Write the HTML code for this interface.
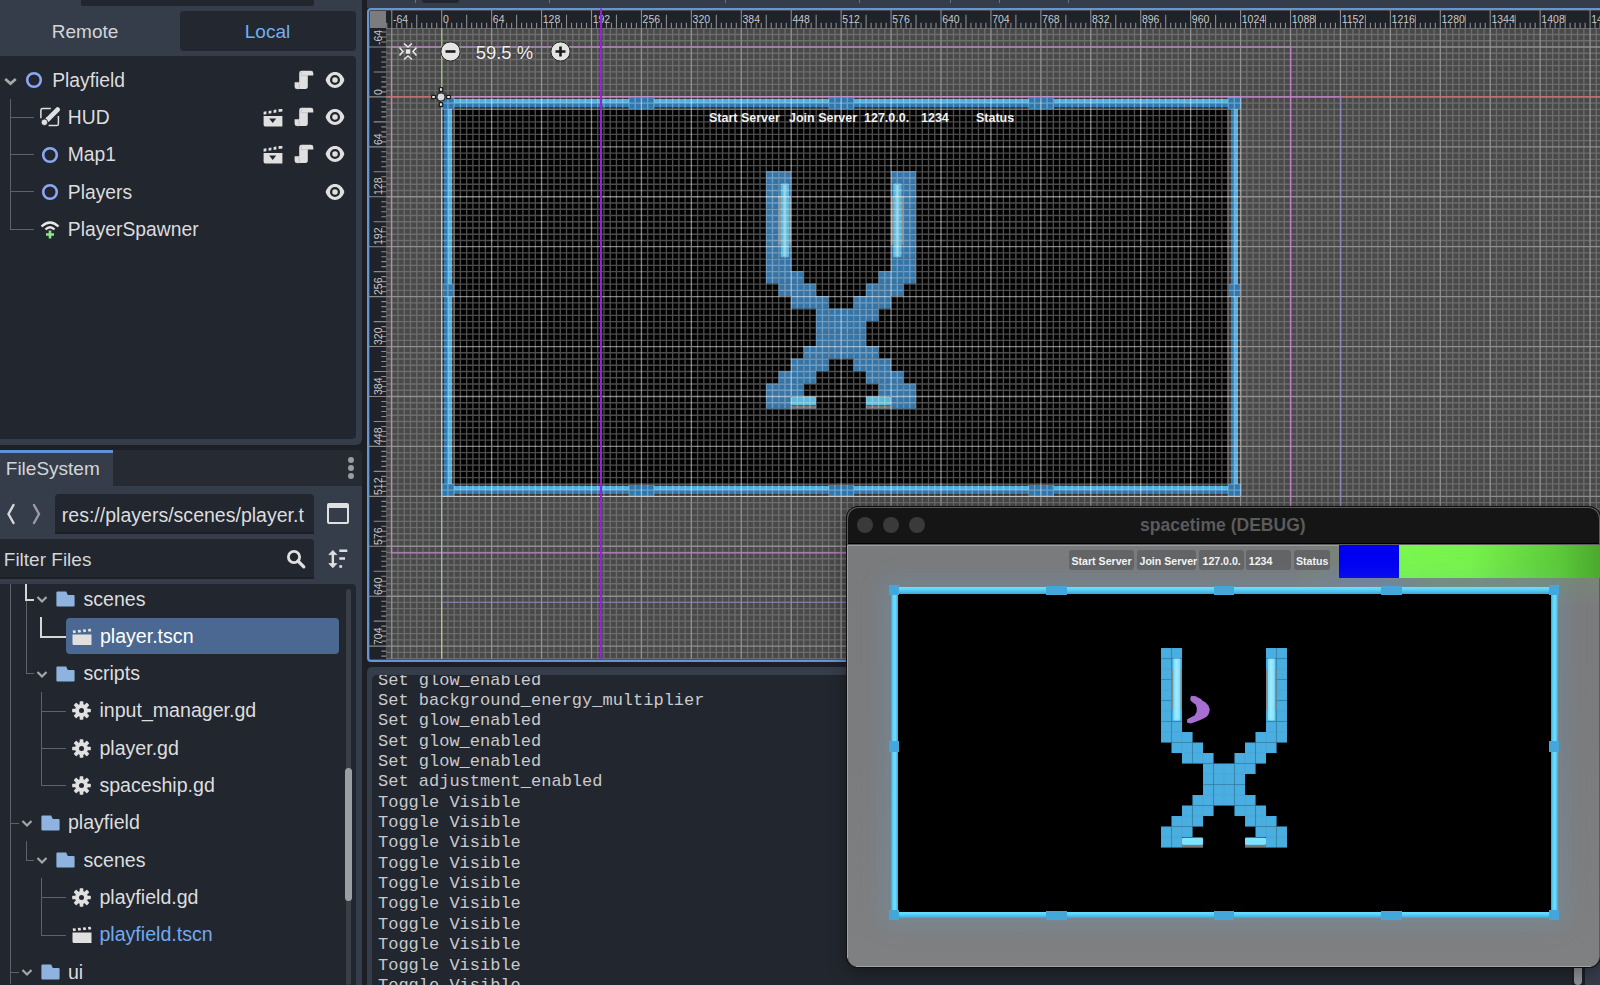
<!DOCTYPE html>
<html><head><meta charset="utf-8"><style>
html,body{margin:0;padding:0;width:1600px;height:985px;overflow:hidden;background:#1c1f25}
.a{position:absolute}
.t{position:absolute;white-space:nowrap;font-family:"Liberation Sans",sans-serif;line-height:1}
</style></head><body>
<div class="a" style="left:0;top:0;width:362px;height:985px;background:#1d2026"></div>
<div class="a" style="left:0;top:0;width:361.7px;height:444.5px;background:#363d4a;border-radius:0 0 6px 0"></div>
<div class="a" style="left:0;top:450px;width:361.7px;height:535px;background:#363d4a;border-radius:0 6px 0 0"></div>
<div class="a" style="left:81px;top:0;width:233px;height:5.6px;background:#22262e;border-radius:0 0 2px 2px"></div>
<div class="a" style="left:180px;top:11px;width:176px;height:39.5px;background:#232730;border-radius:4px"></div>
<div class="t" style="left:51.80px;top:22.42px;font-size:19px;color:#d3d5d8;">Remote</div>
<div class="t" style="left:244.80px;top:22.42px;font-size:19px;color:#73aef0;">Local</div>
<div class="a" style="left:0;top:56px;width:356px;height:383px;background:#22262e;border-radius:0 4px 4px 0"></div>
<div class="a" style="left:0;top:450px;width:361.7px;height:36px;background:#262a33;border-radius:0 6px 0 0"></div>
<div class="a" style="left:0;top:452.5px;width:112.7px;height:33.5px;background:#363d4a"></div>
<div class="a" style="left:0;top:449.8px;width:112.7px;height:3px;background:#5e93d4"></div>
<div class="t" style="left:5.80px;top:459.42px;font-size:19px;color:#d3d5d8;">FileSystem</div>
<div class="a" style="left:348.2px;top:457px;width:6px;height:6px;border-radius:50%;background:#9a9ca0"></div>
<div class="a" style="left:348.2px;top:465px;width:6px;height:6px;border-radius:50%;background:#9a9ca0"></div>
<div class="a" style="left:348.2px;top:473px;width:6px;height:6px;border-radius:50%;background:#9a9ca0"></div>
<div class="a" style="left:0;top:486px;width:362px;height:98px;background:#363d4a"></div>
<svg class="a" style="left:4px;top:500px" width="40" height="28"><path d="M9.5 5 L4.5 14 L9.5 23" stroke="#d8d8d8" stroke-width="2.4" fill="none" stroke-linecap="round"/><path d="M30 5 L35 14 L30 23" stroke="#9a9ca0" stroke-width="2.4" fill="none" stroke-linecap="round"/></svg>
<div class="a" style="left:55px;top:494px;width:259.4px;height:39.7px;background:#22262e;border-radius:4px 4px 0 0;border-bottom:2px solid #1c1f25;box-sizing:border-box"></div>
<div class="t" style="left:61.80px;top:505.95px;font-size:19.55px;color:#dcdddf;">res://players/scenes/player.t</div>
<div class="a" style="left:327.4px;top:503px;width:21.4px;height:21px;border:2.7px solid #e0e0e0;border-top-width:5.4px;box-sizing:border-box;border-radius:2px"></div>
<div class="a" style="left:0;top:539px;width:314.4px;height:39.8px;background:#22262e;border-radius:0 4px 0 0;border-bottom:2px solid #1c1f25;box-sizing:border-box"></div>
<div class="t" style="left:3.80px;top:550.42px;font-size:19px;color:#d3d5d8;">Filter Files</div>
<svg class="a" style="left:285px;top:548px" width="22" height="22"><circle cx="9" cy="9" r="5.6" stroke="#e0e0e0" stroke-width="2.8" fill="none"/><path d="M13 13 L18.8 18.8" stroke="#e0e0e0" stroke-width="3.2" stroke-linecap="round"/></svg>
<svg class="a" style="left:327px;top:548px" width="22" height="22"><path d="M5.85 4 L5.85 18" stroke="#e0e0e0" stroke-width="2.4"/><path d="M1.9 6.6 L5.85 2.4 L9.8 6.6 Z M1.9 15.6 L5.85 19.8 L9.8 15.6 Z" fill="#e0e0e0" stroke="#e0e0e0" stroke-width="0.8" stroke-linejoin="round"/><path d="M12.3 2.7 L20.3 2.7 M12.3 10.4 L18 10.4 M12.3 18.5 L15.1 18.5" stroke="#e0e0e0" stroke-width="2.5"/></svg>
<div class="a" style="left:0;top:584.3px;width:356px;height:401px;background:#22262e;border-radius:0 4px 0 0"></div>
<div class="a" style="left:346px;top:589px;width:5px;height:396px;background:#3a3f47;border-radius:3px"></div>
<div class="a" style="left:345px;top:768px;width:6.5px;height:133px;background:#9b9ea3;border-radius:3.5px"></div>
<div class="a" style="left:10.2px;top:99.4px;width:1px;height:129.79999999999998px;background:#5d6168"></div>
<div class="a" style="left:10.2px;top:117.0px;width:24px;height:1px;background:#5d6168"></div>
<div class="a" style="left:10.2px;top:154.1px;width:24px;height:1px;background:#5d6168"></div>
<div class="a" style="left:10.2px;top:191.4px;width:24px;height:1px;background:#5d6168"></div>
<div class="a" style="left:10.2px;top:228.7px;width:24px;height:1px;background:#5d6168"></div>
<svg class="a" style="left:2.2px;top:74.5px" width="16" height="12"><path d="M3.2 4 L8.5 8.6 L13.8 4" stroke="#a5a7aa" stroke-width="2.8" fill="none"/></svg>
<svg class="a" style="left:25px;top:71px" width="18" height="18"><circle cx="9" cy="9" r="6.8" fill="none" stroke="#8da6f5" stroke-width="2.6"/></svg>
<div class="t" style="left:52.20px;top:70.76px;font-size:19.3px;color:#dcdddf;">Playfield</div>
<svg class="a" style="left:40px;top:107px" width="22" height="22" viewBox="0 0 22 22">
<path d="M10.8 1.5 L2.6 1.5 Q0.9 1.5 0.9 3.2 L0.9 11.2" stroke="#e0e0e0" stroke-width="1.5" fill="none"/>
<path d="M18.4 8.9 L18.4 16.9 Q18.4 18.6 16.7 18.6 L8.6 18.6" stroke="#e0e0e0" stroke-width="1.5" fill="none"/>
<path d="M17.6 2.6 L8.6 11.6" stroke="#e0e0e0" stroke-width="4.8" stroke-linecap="round"/>
<path d="M8.6 11.6 L6.9 13.3" stroke="#e0e0e0" stroke-width="4.8"/>
<circle cx="4.4" cy="15.3" r="3.3" fill="#e0e0e0" stroke="#22262e" stroke-width="0.9"/>
</svg>
<div class="t" style="left:67.80px;top:107.96px;font-size:19.3px;color:#dcdddf;">HUD</div>
<svg class="a" style="left:41px;top:145.5px" width="18" height="18"><circle cx="9" cy="9" r="6.8" fill="none" stroke="#8da6f5" stroke-width="2.6"/></svg>
<div class="t" style="left:67.80px;top:145.26px;font-size:19.3px;color:#dcdddf;">Map1</div>
<svg class="a" style="left:41px;top:182.8px" width="18" height="18"><circle cx="9" cy="9" r="6.8" fill="none" stroke="#8da6f5" stroke-width="2.6"/></svg>
<div class="t" style="left:67.80px;top:182.56px;font-size:19.3px;color:#dcdddf;">Players</div>
<svg class="a" style="left:39px;top:218px" width="22" height="22" viewBox="0 0 22 22">
<path d="M2.5 8.5 Q11 0.5 19.5 8.5" stroke="#e8e8e8" stroke-width="2.4" fill="none"/>
<path d="M6.5 11.5 Q11 7.2 15.5 11.5" stroke="#e8e8e8" stroke-width="2.4" fill="none"/>
<path d="M11 12.5 L11 20.5 M7 16.5 L15 16.5" stroke="#8ee68e" stroke-width="2.6"/>
</svg>
<div class="t" style="left:67.80px;top:219.86px;font-size:19.3px;color:#dcdddf;">PlayerSpawner</div>
<svg class="a" style="left:294px;top:69.60000000000001px" width="20" height="20" viewBox="0 0 20 20">
<path d="M5.2 3.2 Q5.2 0.8 7.6 0.8 L16.8 0.8 Q19.3 0.8 19.3 3.2 L19.3 5.6 L13.8 5.6 L13.8 16.6 Q13.8 19.1 11.3 19.1 L3 19.1 Q0.6 19.1 0.6 16.6 L0.6 12.3 L5.2 12.3 Z" fill="#e0e0e0"/>
<path d="M8.6 1.1 Q7.3 1.6 7.3 3.6 L7.3 5.6 L13.8 5.6" stroke="#c6c6c6" stroke-width="0.9" fill="none"/>
<path d="M3.6 12.4 Q5.2 13 5.2 15.2 L5.2 17.6 Q5.2 19 3.6 19.1" stroke="#bdbdbd" stroke-width="0.9" fill="none"/>
</svg>
<svg class="a" style="left:325.0px;top:70.8px" width="20" height="18" viewBox="0 0 20 18">
<path d="M0.6 9 C4 -1.6, 16 -1.6, 19.4 9 C16 19.6, 4 19.6, 0.6 9 Z" fill="#e0e0e0"/>
<circle cx="10" cy="9" r="3.9" fill="none" stroke="#22262e" stroke-width="2.3"/>
</svg>
<svg class="a" style="left:262.5px;top:109.0px" width="20" height="18" viewBox="0 0 20 18">
<path d="M0.6 2.2 L3.4 1.7 L3.4 4.6 L0.6 5.1 Z M5.6 1.3 L8.4 0.8 L8.4 3.7 L5.6 4.2 Z M10.6 0.4 L13.4 -0.1 L13.4 2.8 L10.6 3.3 Z M15.6 -0.5 L19.4 -1.1 L19.4 2 L15.6 2.4 Z" fill="#e0e0e0" transform="translate(0,0.6)"/>
<path d="M0.6 6.9 L19.4 6.9 L19.4 17.4 L2.2 17.4 Q0.6 17.4 0.6 15.8 Z" fill="#e0e0e0"/>
<path d="M6.2 9.4 L13.2 9.4 L9.7 13.9 Z" fill="#22262e"/>
</svg>
<svg class="a" style="left:294px;top:106.9px" width="20" height="20" viewBox="0 0 20 20">
<path d="M5.2 3.2 Q5.2 0.8 7.6 0.8 L16.8 0.8 Q19.3 0.8 19.3 3.2 L19.3 5.6 L13.8 5.6 L13.8 16.6 Q13.8 19.1 11.3 19.1 L3 19.1 Q0.6 19.1 0.6 16.6 L0.6 12.3 L5.2 12.3 Z" fill="#e0e0e0"/>
<path d="M8.6 1.1 Q7.3 1.6 7.3 3.6 L7.3 5.6 L13.8 5.6" stroke="#c6c6c6" stroke-width="0.9" fill="none"/>
<path d="M3.6 12.4 Q5.2 13 5.2 15.2 L5.2 17.6 Q5.2 19 3.6 19.1" stroke="#bdbdbd" stroke-width="0.9" fill="none"/>
</svg>
<svg class="a" style="left:325.0px;top:108.1px" width="20" height="18" viewBox="0 0 20 18">
<path d="M0.6 9 C4 -1.6, 16 -1.6, 19.4 9 C16 19.6, 4 19.6, 0.6 9 Z" fill="#e0e0e0"/>
<circle cx="10" cy="9" r="3.9" fill="none" stroke="#22262e" stroke-width="2.3"/>
</svg>
<svg class="a" style="left:262.5px;top:146.1px" width="20" height="18" viewBox="0 0 20 18">
<path d="M0.6 2.2 L3.4 1.7 L3.4 4.6 L0.6 5.1 Z M5.6 1.3 L8.4 0.8 L8.4 3.7 L5.6 4.2 Z M10.6 0.4 L13.4 -0.1 L13.4 2.8 L10.6 3.3 Z M15.6 -0.5 L19.4 -1.1 L19.4 2 L15.6 2.4 Z" fill="#e0e0e0" transform="translate(0,0.6)"/>
<path d="M0.6 6.9 L19.4 6.9 L19.4 17.4 L2.2 17.4 Q0.6 17.4 0.6 15.8 Z" fill="#e0e0e0"/>
<path d="M6.2 9.4 L13.2 9.4 L9.7 13.9 Z" fill="#22262e"/>
</svg>
<svg class="a" style="left:294px;top:144.0px" width="20" height="20" viewBox="0 0 20 20">
<path d="M5.2 3.2 Q5.2 0.8 7.6 0.8 L16.8 0.8 Q19.3 0.8 19.3 3.2 L19.3 5.6 L13.8 5.6 L13.8 16.6 Q13.8 19.1 11.3 19.1 L3 19.1 Q0.6 19.1 0.6 16.6 L0.6 12.3 L5.2 12.3 Z" fill="#e0e0e0"/>
<path d="M8.6 1.1 Q7.3 1.6 7.3 3.6 L7.3 5.6 L13.8 5.6" stroke="#c6c6c6" stroke-width="0.9" fill="none"/>
<path d="M3.6 12.4 Q5.2 13 5.2 15.2 L5.2 17.6 Q5.2 19 3.6 19.1" stroke="#bdbdbd" stroke-width="0.9" fill="none"/>
</svg>
<svg class="a" style="left:325.0px;top:145.2px" width="20" height="18" viewBox="0 0 20 18">
<path d="M0.6 9 C4 -1.6, 16 -1.6, 19.4 9 C16 19.6, 4 19.6, 0.6 9 Z" fill="#e0e0e0"/>
<circle cx="10" cy="9" r="3.9" fill="none" stroke="#22262e" stroke-width="2.3"/>
</svg>
<svg class="a" style="left:325.0px;top:182.5px" width="20" height="18" viewBox="0 0 20 18">
<path d="M0.6 9 C4 -1.6, 16 -1.6, 19.4 9 C16 19.6, 4 19.6, 0.6 9 Z" fill="#e0e0e0"/>
<circle cx="10" cy="9" r="3.9" fill="none" stroke="#22262e" stroke-width="2.3"/>
</svg>
<div class="a" style="left:10.2px;top:584.3px;width:1px;height:400px;background:#5d6168"></div>
<div class="a" style="left:65.8px;top:618px;width:273.5px;height:36.3px;background:#4a6892;border-radius:4px"></div>
<div class="a" style="left:25.2px;top:584.3px;width:2px;height:16.0px;background:#d6d6d6"></div>
<div class="a" style="left:25.2px;top:598.8px;width:9px;height:2px;background:#d6d6d6"></div>
<div class="a" style="left:40.4px;top:617px;width:2px;height:20.59999999999991px;background:#d6d6d6"></div>
<div class="a" style="left:40.4px;top:636.0999999999999px;width:25.5px;height:2px;background:#d6d6d6"></div>
<div class="a" style="left:25.7px;top:600.8px;width:1px;height:73.10000000000002px;background:#5d6168"></div>
<div class="a" style="left:25.7px;top:673.4px;width:8.5px;height:1px;background:#5d6168"></div>
<div class="a" style="left:41px;top:691.9px;width:1px;height:93.89999999999998px;background:#5d6168"></div>
<div class="a" style="left:41px;top:710.6999999999999px;width:24.5px;height:1px;background:#5d6168"></div>
<div class="a" style="left:41px;top:748.0px;width:24.5px;height:1px;background:#5d6168"></div>
<div class="a" style="left:41px;top:785.3px;width:24.5px;height:1px;background:#5d6168"></div>
<div class="a" style="left:10.2px;top:822.5999999999999px;width:8.5px;height:1px;background:#5d6168"></div>
<div class="a" style="left:10.2px;top:971.8px;width:8.5px;height:1px;background:#5d6168"></div>
<div class="a" style="left:25.7px;top:841.0999999999999px;width:1px;height:19.299999999999955px;background:#5d6168"></div>
<div class="a" style="left:25.7px;top:859.8999999999999px;width:8.5px;height:1px;background:#5d6168"></div>
<div class="a" style="left:41px;top:878.3999999999999px;width:1px;height:56.600000000000136px;background:#5d6168"></div>
<div class="a" style="left:41px;top:897.1999999999999px;width:24.5px;height:1px;background:#5d6168"></div>
<div class="a" style="left:41px;top:934.5px;width:24.5px;height:1px;background:#5d6168"></div>
<svg class="a" style="left:36.3px;top:595.3px" width="12" height="9"><path d="M1.5 2 L6 6.5 L10.5 2" stroke="#a5a7aa" stroke-width="2.2" fill="none"/></svg>
<svg class="a" style="left:56.3px;top:591.0px" width="19" height="16" viewBox="0 0 19 16"><path d="M0.4 1.4 Q0.4 0.4 1.4 0.4 L10.2 0.4 L11.8 4 L17.6 4 Q18.6 4 18.6 5 L18.6 14.6 Q18.6 15.6 17.6 15.6 L1.4 15.6 Q0.4 15.6 0.4 14.6 Z" fill="#8db3de"/></svg>
<div class="t" style="left:83.40px;top:589.51px;font-size:19.6px;color:#dcdddf;">scenes</div>
<svg class="a" style="left:71.6px;top:627.5999999999999px" width="20" height="18" viewBox="0 0 20 18"><path d="M0.6 2.6 L3.4 2.2 L4.0 4.8 L1.2 5.2 Z M5.7 2.1 L8.5 1.7 L9.1 4.3 L6.3 4.7 Z M10.8 1.6 L13.6 1.2 L14.2 3.8 L11.4 4.2 Z M15.9 1.1 L18.7 0.7 L19.3 3.3 L16.5 3.7 Z " fill="#e0e0e0"/><path d="M0.5 6.5 L19.5 6.5 L19.5 17 L2 17 Q0.5 17 0.5 15.5 Z" fill="#e0e0e0"/></svg>
<div class="t" style="left:99.90px;top:626.81px;font-size:19.6px;color:#ffffff;">player.tscn</div>
<svg class="a" style="left:36.3px;top:669.9px" width="12" height="9"><path d="M1.5 2 L6 6.5 L10.5 2" stroke="#a5a7aa" stroke-width="2.2" fill="none"/></svg>
<svg class="a" style="left:56.3px;top:665.6px" width="19" height="16" viewBox="0 0 19 16"><path d="M0.4 1.4 Q0.4 0.4 1.4 0.4 L10.2 0.4 L11.8 4 L17.6 4 Q18.6 4 18.6 5 L18.6 14.6 Q18.6 15.6 17.6 15.6 L1.4 15.6 Q0.4 15.6 0.4 14.6 Z" fill="#8db3de"/></svg>
<div class="t" style="left:83.40px;top:664.11px;font-size:19.6px;color:#dcdddf;">scripts</div>
<svg class="a" style="left:71.90px;top:701.30px" width="19" height="19" viewBox="-9.5 -9.5 19 19"><g fill="#e0e0e0"><rect x="-1.85" y="-9.3" width="3.7" height="4.2" rx="0.7" transform="rotate(0)"/><rect x="-1.85" y="-9.3" width="3.7" height="4.2" rx="0.7" transform="rotate(45)"/><rect x="-1.85" y="-9.3" width="3.7" height="4.2" rx="0.7" transform="rotate(90)"/><rect x="-1.85" y="-9.3" width="3.7" height="4.2" rx="0.7" transform="rotate(135)"/><rect x="-1.85" y="-9.3" width="3.7" height="4.2" rx="0.7" transform="rotate(180)"/><rect x="-1.85" y="-9.3" width="3.7" height="4.2" rx="0.7" transform="rotate(225)"/><rect x="-1.85" y="-9.3" width="3.7" height="4.2" rx="0.7" transform="rotate(270)"/><rect x="-1.85" y="-9.3" width="3.7" height="4.2" rx="0.7" transform="rotate(315)"/><circle r="6.5"/></g><circle r="2.5" fill="#22262e"/></svg>
<div class="t" style="left:99.40px;top:701.41px;font-size:19.6px;color:#dcdddf;">input_manager.gd</div>
<svg class="a" style="left:71.90px;top:738.60px" width="19" height="19" viewBox="-9.5 -9.5 19 19"><g fill="#e0e0e0"><rect x="-1.85" y="-9.3" width="3.7" height="4.2" rx="0.7" transform="rotate(0)"/><rect x="-1.85" y="-9.3" width="3.7" height="4.2" rx="0.7" transform="rotate(45)"/><rect x="-1.85" y="-9.3" width="3.7" height="4.2" rx="0.7" transform="rotate(90)"/><rect x="-1.85" y="-9.3" width="3.7" height="4.2" rx="0.7" transform="rotate(135)"/><rect x="-1.85" y="-9.3" width="3.7" height="4.2" rx="0.7" transform="rotate(180)"/><rect x="-1.85" y="-9.3" width="3.7" height="4.2" rx="0.7" transform="rotate(225)"/><rect x="-1.85" y="-9.3" width="3.7" height="4.2" rx="0.7" transform="rotate(270)"/><rect x="-1.85" y="-9.3" width="3.7" height="4.2" rx="0.7" transform="rotate(315)"/><circle r="6.5"/></g><circle r="2.5" fill="#22262e"/></svg>
<div class="t" style="left:99.40px;top:738.71px;font-size:19.6px;color:#dcdddf;">player.gd</div>
<svg class="a" style="left:71.90px;top:775.90px" width="19" height="19" viewBox="-9.5 -9.5 19 19"><g fill="#e0e0e0"><rect x="-1.85" y="-9.3" width="3.7" height="4.2" rx="0.7" transform="rotate(0)"/><rect x="-1.85" y="-9.3" width="3.7" height="4.2" rx="0.7" transform="rotate(45)"/><rect x="-1.85" y="-9.3" width="3.7" height="4.2" rx="0.7" transform="rotate(90)"/><rect x="-1.85" y="-9.3" width="3.7" height="4.2" rx="0.7" transform="rotate(135)"/><rect x="-1.85" y="-9.3" width="3.7" height="4.2" rx="0.7" transform="rotate(180)"/><rect x="-1.85" y="-9.3" width="3.7" height="4.2" rx="0.7" transform="rotate(225)"/><rect x="-1.85" y="-9.3" width="3.7" height="4.2" rx="0.7" transform="rotate(270)"/><rect x="-1.85" y="-9.3" width="3.7" height="4.2" rx="0.7" transform="rotate(315)"/><circle r="6.5"/></g><circle r="2.5" fill="#22262e"/></svg>
<div class="t" style="left:99.40px;top:776.01px;font-size:19.6px;color:#dcdddf;">spaceship.gd</div>
<svg class="a" style="left:20.5px;top:819.0999999999999px" width="12" height="9"><path d="M1.5 2 L6 6.5 L10.5 2" stroke="#a5a7aa" stroke-width="2.2" fill="none"/></svg>
<svg class="a" style="left:40.5px;top:814.8px" width="19" height="16" viewBox="0 0 19 16"><path d="M0.4 1.4 Q0.4 0.4 1.4 0.4 L10.2 0.4 L11.8 4 L17.6 4 Q18.6 4 18.6 5 L18.6 14.6 Q18.6 15.6 17.6 15.6 L1.4 15.6 Q0.4 15.6 0.4 14.6 Z" fill="#8db3de"/></svg>
<div class="t" style="left:67.90px;top:813.31px;font-size:19.6px;color:#dcdddf;">playfield</div>
<svg class="a" style="left:36.3px;top:856.3999999999999px" width="12" height="9"><path d="M1.5 2 L6 6.5 L10.5 2" stroke="#a5a7aa" stroke-width="2.2" fill="none"/></svg>
<svg class="a" style="left:56.3px;top:852.0999999999999px" width="19" height="16" viewBox="0 0 19 16"><path d="M0.4 1.4 Q0.4 0.4 1.4 0.4 L10.2 0.4 L11.8 4 L17.6 4 Q18.6 4 18.6 5 L18.6 14.6 Q18.6 15.6 17.6 15.6 L1.4 15.6 Q0.4 15.6 0.4 14.6 Z" fill="#8db3de"/></svg>
<div class="t" style="left:83.40px;top:850.61px;font-size:19.6px;color:#dcdddf;">scenes</div>
<svg class="a" style="left:71.90px;top:887.80px" width="19" height="19" viewBox="-9.5 -9.5 19 19"><g fill="#e0e0e0"><rect x="-1.85" y="-9.3" width="3.7" height="4.2" rx="0.7" transform="rotate(0)"/><rect x="-1.85" y="-9.3" width="3.7" height="4.2" rx="0.7" transform="rotate(45)"/><rect x="-1.85" y="-9.3" width="3.7" height="4.2" rx="0.7" transform="rotate(90)"/><rect x="-1.85" y="-9.3" width="3.7" height="4.2" rx="0.7" transform="rotate(135)"/><rect x="-1.85" y="-9.3" width="3.7" height="4.2" rx="0.7" transform="rotate(180)"/><rect x="-1.85" y="-9.3" width="3.7" height="4.2" rx="0.7" transform="rotate(225)"/><rect x="-1.85" y="-9.3" width="3.7" height="4.2" rx="0.7" transform="rotate(270)"/><rect x="-1.85" y="-9.3" width="3.7" height="4.2" rx="0.7" transform="rotate(315)"/><circle r="6.5"/></g><circle r="2.5" fill="#22262e"/></svg>
<div class="t" style="left:99.40px;top:887.91px;font-size:19.6px;color:#dcdddf;">playfield.gd</div>
<svg class="a" style="left:71.6px;top:926.0px" width="20" height="18" viewBox="0 0 20 18"><path d="M0.6 2.6 L3.4 2.2 L4.0 4.8 L1.2 5.2 Z M5.7 2.1 L8.5 1.7 L9.1 4.3 L6.3 4.7 Z M10.8 1.6 L13.6 1.2 L14.2 3.8 L11.4 4.2 Z M15.9 1.1 L18.7 0.7 L19.3 3.3 L16.5 3.7 Z " fill="#e0e0e0"/><path d="M0.5 6.5 L19.5 6.5 L19.5 17 L2 17 Q0.5 17 0.5 15.5 Z" fill="#e0e0e0"/></svg>
<div class="t" style="left:99.40px;top:925.21px;font-size:19.6px;color:#72aaf0;">playfield.tscn</div>
<svg class="a" style="left:20.5px;top:968.3px" width="12" height="9"><path d="M1.5 2 L6 6.5 L10.5 2" stroke="#a5a7aa" stroke-width="2.2" fill="none"/></svg>
<svg class="a" style="left:40.5px;top:964.0px" width="19" height="16" viewBox="0 0 19 16"><path d="M0.4 1.4 Q0.4 0.4 1.4 0.4 L10.2 0.4 L11.8 4 L17.6 4 Q18.6 4 18.6 5 L18.6 14.6 Q18.6 15.6 17.6 15.6 L1.4 15.6 Q0.4 15.6 0.4 14.6 Z" fill="#8db3de"/></svg>
<div class="t" style="left:67.90px;top:962.51px;font-size:19.6px;color:#dcdddf;">ui</div>
<div class="a" style="left:362px;top:0;width:5px;height:985px;background:#1c1f25"></div>
<div class="a" style="left:367px;top:0;width:1233px;height:8.4px;background:#363d4a"></div>
<div class="a" style="left:422px;top:0;width:36.5px;height:3px;background:#22262e;border-radius:0 0 4px 4px"></div>
<div class="a" style="left:415.3px;top:0;width:1px;height:3px;background:#6b7080"></div>
<div class="a" style="left:548.5px;top:0;width:1px;height:3px;background:#6b7080"></div>
<div class="a" style="left:724.8px;top:0;width:1px;height:3px;background:#6b7080"></div>
<div class="a" style="left:858.5px;top:0;width:1px;height:3px;background:#6b7080"></div>
<div class="a" style="left:949.9px;top:0;width:1px;height:3px;background:#6b7080"></div>
<div class="a" style="left:999.4px;top:0;width:1px;height:3px;background:#6b7080"></div>
<div class="a" style="left:1068.4px;top:0;width:1px;height:3px;background:#6b7080"></div>
<div class="a" style="left:367px;top:8.4px;width:1240px;height:653.2px;border:2.7px solid #6396d2;border-radius:4px;box-sizing:border-box;background:#494949"></div>
<div class="a" style="left:386.4px;top:28.2px;width:1213.6px;height:630.5999999999999px;background:#494949"></div>
<svg class="a" style="left:0;top:0" width="1600" height="985"><path d="M385.53 28.20V658.80M398.01 28.20V658.80M404.25 28.20V658.80M410.49 28.20V658.80M416.74 28.20V658.80M422.98 28.20V658.80M429.22 28.20V658.80M435.46 28.20V658.80M447.94 28.20V658.80M454.18 28.20V658.80M460.42 28.20V658.80M466.66 28.20V658.80M472.91 28.20V658.80M479.15 28.20V658.80M485.39 28.20V658.80M497.87 28.20V658.80M504.11 28.20V658.80M510.35 28.20V658.80M516.60 28.20V658.80M522.84 28.20V658.80M529.08 28.20V658.80M535.32 28.20V658.80M547.80 28.20V658.80M554.04 28.20V658.80M560.28 28.20V658.80M566.52 28.20V658.80M572.77 28.20V658.80M579.01 28.20V658.80M585.25 28.20V658.80M597.73 28.20V658.80M603.97 28.20V658.80M610.21 28.20V658.80M616.45 28.20V658.80M622.70 28.20V658.80M628.94 28.20V658.80M635.18 28.20V658.80M647.66 28.20V658.80M653.90 28.20V658.80M660.14 28.20V658.80M666.38 28.20V658.80M672.63 28.20V658.80M678.87 28.20V658.80M685.11 28.20V658.80M697.59 28.20V658.80M703.83 28.20V658.80M710.07 28.20V658.80M716.32 28.20V658.80M722.56 28.20V658.80M728.80 28.20V658.80M735.04 28.20V658.80M747.52 28.20V658.80M753.76 28.20V658.80M760.00 28.20V658.80M766.25 28.20V658.80M772.49 28.20V658.80M778.73 28.20V658.80M784.97 28.20V658.80M797.45 28.20V658.80M803.69 28.20V658.80M809.93 28.20V658.80M816.17 28.20V658.80M822.42 28.20V658.80M828.66 28.20V658.80M834.90 28.20V658.80M847.38 28.20V658.80M853.62 28.20V658.80M859.86 28.20V658.80M866.11 28.20V658.80M872.35 28.20V658.80M878.59 28.20V658.80M884.83 28.20V658.80M897.31 28.20V658.80M903.55 28.20V658.80M909.79 28.20V658.80M916.03 28.20V658.80M922.28 28.20V658.80M928.52 28.20V658.80M934.76 28.20V658.80M947.24 28.20V658.80M953.48 28.20V658.80M959.72 28.20V658.80M965.96 28.20V658.80M972.21 28.20V658.80M978.45 28.20V658.80M984.69 28.20V658.80M997.17 28.20V658.80M1003.41 28.20V658.80M1009.65 28.20V658.80M1015.89 28.20V658.80M1022.14 28.20V658.80M1028.38 28.20V658.80M1034.62 28.20V658.80M1047.10 28.20V658.80M1053.34 28.20V658.80M1059.58 28.20V658.80M1065.83 28.20V658.80M1072.07 28.20V658.80M1078.31 28.20V658.80M1084.55 28.20V658.80M1097.03 28.20V658.80M1103.27 28.20V658.80M1109.51 28.20V658.80M1115.75 28.20V658.80M1122.00 28.20V658.80M1128.24 28.20V658.80M1134.48 28.20V658.80M1146.96 28.20V658.80M1153.20 28.20V658.80M1159.44 28.20V658.80M1165.68 28.20V658.80M1171.93 28.20V658.80M1178.17 28.20V658.80M1184.41 28.20V658.80M1196.89 28.20V658.80M1203.13 28.20V658.80M1209.37 28.20V658.80M1215.62 28.20V658.80M1221.86 28.20V658.80M1228.10 28.20V658.80M1234.34 28.20V658.80M1246.82 28.20V658.80M1253.06 28.20V658.80M1259.30 28.20V658.80M1265.55 28.20V658.80M1271.79 28.20V658.80M1278.03 28.20V658.80M1284.27 28.20V658.80M1296.75 28.20V658.80M1302.99 28.20V658.80M1309.23 28.20V658.80M1315.47 28.20V658.80M1321.72 28.20V658.80M1327.96 28.20V658.80M1334.20 28.20V658.80M1346.68 28.20V658.80M1352.92 28.20V658.80M1359.16 28.20V658.80M1365.40 28.20V658.80M1371.65 28.20V658.80M1377.89 28.20V658.80M1384.13 28.20V658.80M1396.61 28.20V658.80M1402.85 28.20V658.80M1409.09 28.20V658.80M1415.34 28.20V658.80M1421.58 28.20V658.80M1427.82 28.20V658.80M1434.06 28.20V658.80M1446.54 28.20V658.80M1452.78 28.20V658.80M1459.02 28.20V658.80M1465.26 28.20V658.80M1471.51 28.20V658.80M1477.75 28.20V658.80M1483.99 28.20V658.80M1496.47 28.20V658.80M1502.71 28.20V658.80M1508.95 28.20V658.80M1515.19 28.20V658.80M1521.44 28.20V658.80M1527.68 28.20V658.80M1533.92 28.20V658.80M1546.40 28.20V658.80M1552.64 28.20V658.80M1558.88 28.20V658.80M1565.12 28.20V658.80M1571.37 28.20V658.80M1577.61 28.20V658.80M1583.85 28.20V658.80M1596.33 28.20V658.80M386.40 28.25H1600.00M386.40 34.49H1600.00M386.40 40.73H1600.00M386.40 53.21H1600.00M386.40 59.45H1600.00M386.40 65.69H1600.00M386.40 71.94H1600.00M386.40 78.18H1600.00M386.40 84.42H1600.00M386.40 90.66H1600.00M386.40 103.14H1600.00M386.40 109.38H1600.00M386.40 115.62H1600.00M386.40 121.87H1600.00M386.40 128.11H1600.00M386.40 134.35H1600.00M386.40 140.59H1600.00M386.40 153.07H1600.00M386.40 159.31H1600.00M386.40 165.55H1600.00M386.40 171.80H1600.00M386.40 178.04H1600.00M386.40 184.28H1600.00M386.40 190.52H1600.00M386.40 203.00H1600.00M386.40 209.24H1600.00M386.40 215.48H1600.00M386.40 221.73H1600.00M386.40 227.97H1600.00M386.40 234.21H1600.00M386.40 240.45H1600.00M386.40 252.93H1600.00M386.40 259.17H1600.00M386.40 265.41H1600.00M386.40 271.65H1600.00M386.40 277.90H1600.00M386.40 284.14H1600.00M386.40 290.38H1600.00M386.40 302.86H1600.00M386.40 309.10H1600.00M386.40 315.34H1600.00M386.40 321.59H1600.00M386.40 327.83H1600.00M386.40 334.07H1600.00M386.40 340.31H1600.00M386.40 352.79H1600.00M386.40 359.03H1600.00M386.40 365.27H1600.00M386.40 371.51H1600.00M386.40 377.76H1600.00M386.40 384.00H1600.00M386.40 390.24H1600.00M386.40 402.72H1600.00M386.40 408.96H1600.00M386.40 415.20H1600.00M386.40 421.45H1600.00M386.40 427.69H1600.00M386.40 433.93H1600.00M386.40 440.17H1600.00M386.40 452.65H1600.00M386.40 458.89H1600.00M386.40 465.13H1600.00M386.40 471.38H1600.00M386.40 477.62H1600.00M386.40 483.86H1600.00M386.40 490.10H1600.00M386.40 502.58H1600.00M386.40 508.82H1600.00M386.40 515.06H1600.00M386.40 521.30H1600.00M386.40 527.55H1600.00M386.40 533.79H1600.00M386.40 540.03H1600.00M386.40 552.51H1600.00M386.40 558.75H1600.00M386.40 564.99H1600.00M386.40 571.24H1600.00M386.40 577.48H1600.00M386.40 583.72H1600.00M386.40 589.96H1600.00M386.40 602.44H1600.00M386.40 608.68H1600.00M386.40 614.92H1600.00M386.40 621.16H1600.00M386.40 627.41H1600.00M386.40 633.65H1600.00M386.40 639.89H1600.00M386.40 652.37H1600.00M386.40 658.61H1600.00" stroke="#6d6d6d" stroke-width="1.35" fill="none"/><path d="M391.77 28.20V658.80M441.70 28.20V658.80M491.63 28.20V658.80M541.56 28.20V658.80M591.49 28.20V658.80M641.42 28.20V658.80M691.35 28.20V658.80M741.28 28.20V658.80M791.21 28.20V658.80M841.14 28.20V658.80M891.07 28.20V658.80M941.00 28.20V658.80M990.93 28.20V658.80M1040.86 28.20V658.80M1090.79 28.20V658.80M1140.72 28.20V658.80M1190.65 28.20V658.80M1240.58 28.20V658.80M1290.51 28.20V658.80M1340.44 28.20V658.80M1390.37 28.20V658.80M1440.30 28.20V658.80M1490.23 28.20V658.80M1540.16 28.20V658.80M1590.09 28.20V658.80M386.40 46.97H1600.00M386.40 96.90H1600.00M386.40 146.83H1600.00M386.40 196.76H1600.00M386.40 246.69H1600.00M386.40 296.62H1600.00M386.40 346.55H1600.00M386.40 396.48H1600.00M386.40 446.41H1600.00M386.40 496.34H1600.00M386.40 546.27H1600.00M386.40 596.20H1600.00M386.40 646.13H1600.00" stroke="#909090" stroke-width="1.35" fill="none"/></svg>
<div class="a" style="left:441.5px;top:96.5px;width:799px;height:399.6px;background:#383434"></div>
<div class="a" style="left:454.6px;top:109.8px;width:772.8px;height:373.8px;background:#000"></div>
<div class="t" style="left:709px;top:111.60px;font-size:12.5px;font-weight:bold;color:#eeeeee">Start Server</div>
<div class="t" style="left:789px;top:111.60px;font-size:12.5px;font-weight:bold;color:#eeeeee">Join Server</div>
<div class="t" style="left:864px;top:111.60px;font-size:12.5px;font-weight:bold;color:#eeeeee">127.0.0.</div>
<div class="t" style="left:921px;top:111.60px;font-size:12.5px;font-weight:bold;color:#eeeeee">1234</div>
<div class="t" style="left:976px;top:111.60px;font-size:12.5px;font-weight:bold;color:#eeeeee">Status</div>
<svg class="a" style="left:766.40px;top:171.40px" width="150.00" height="237.50" viewBox="0 0 150.000 237.500">
<rect x="0.00" y="0.00" width="12.55" height="12.55" fill="#3574a6"/>
<rect x="12.50" y="0.00" width="12.55" height="12.55" fill="#3574a6"/>
<rect x="125.00" y="0.00" width="12.55" height="12.55" fill="#3574a6"/>
<rect x="137.50" y="0.00" width="12.55" height="12.55" fill="#3574a6"/>
<rect x="0.00" y="12.50" width="12.55" height="12.55" fill="#3574a6"/>
<rect x="12.50" y="12.50" width="12.55" height="12.55" fill="#3574a6"/>
<rect x="125.00" y="12.50" width="12.55" height="12.55" fill="#3574a6"/>
<rect x="137.50" y="12.50" width="12.55" height="12.55" fill="#3574a6"/>
<rect x="0.00" y="25.00" width="12.55" height="12.55" fill="#3574a6"/>
<rect x="12.50" y="25.00" width="12.55" height="12.55" fill="#3574a6"/>
<rect x="125.00" y="25.00" width="12.55" height="12.55" fill="#3574a6"/>
<rect x="137.50" y="25.00" width="12.55" height="12.55" fill="#3574a6"/>
<rect x="0.00" y="37.50" width="12.55" height="12.55" fill="#3574a6"/>
<rect x="12.50" y="37.50" width="12.55" height="12.55" fill="#3574a6"/>
<rect x="125.00" y="37.50" width="12.55" height="12.55" fill="#3574a6"/>
<rect x="137.50" y="37.50" width="12.55" height="12.55" fill="#3574a6"/>
<rect x="0.00" y="50.00" width="12.55" height="12.55" fill="#3574a6"/>
<rect x="12.50" y="50.00" width="12.55" height="12.55" fill="#3574a6"/>
<rect x="125.00" y="50.00" width="12.55" height="12.55" fill="#3574a6"/>
<rect x="137.50" y="50.00" width="12.55" height="12.55" fill="#3574a6"/>
<rect x="0.00" y="62.50" width="12.55" height="12.55" fill="#3574a6"/>
<rect x="12.50" y="62.50" width="12.55" height="12.55" fill="#3574a6"/>
<rect x="125.00" y="62.50" width="12.55" height="12.55" fill="#3574a6"/>
<rect x="137.50" y="62.50" width="12.55" height="12.55" fill="#3574a6"/>
<rect x="0.00" y="75.00" width="12.55" height="12.55" fill="#3574a6"/>
<rect x="12.50" y="75.00" width="12.55" height="12.55" fill="#3574a6"/>
<rect x="125.00" y="75.00" width="12.55" height="12.55" fill="#3574a6"/>
<rect x="137.50" y="75.00" width="12.55" height="12.55" fill="#3574a6"/>
<rect x="0.00" y="87.50" width="12.55" height="12.55" fill="#3574a6"/>
<rect x="12.50" y="87.50" width="12.55" height="12.55" fill="#3574a6"/>
<rect x="125.00" y="87.50" width="12.55" height="12.55" fill="#3574a6"/>
<rect x="137.50" y="87.50" width="12.55" height="12.55" fill="#3574a6"/>
<rect x="0.00" y="100.00" width="12.55" height="12.55" fill="#3574a6"/>
<rect x="12.50" y="100.00" width="12.55" height="12.55" fill="#3574a6"/>
<rect x="25.00" y="100.00" width="12.55" height="12.55" fill="#3574a6"/>
<rect x="112.50" y="100.00" width="12.55" height="12.55" fill="#3574a6"/>
<rect x="125.00" y="100.00" width="12.55" height="12.55" fill="#3574a6"/>
<rect x="137.50" y="100.00" width="12.55" height="12.55" fill="#3574a6"/>
<rect x="12.50" y="112.50" width="12.55" height="12.55" fill="#3574a6"/>
<rect x="25.00" y="112.50" width="12.55" height="12.55" fill="#3574a6"/>
<rect x="37.50" y="112.50" width="12.55" height="12.55" fill="#3574a6"/>
<rect x="100.00" y="112.50" width="12.55" height="12.55" fill="#3574a6"/>
<rect x="112.50" y="112.50" width="12.55" height="12.55" fill="#3574a6"/>
<rect x="125.00" y="112.50" width="12.55" height="12.55" fill="#3574a6"/>
<rect x="25.00" y="125.00" width="12.55" height="12.55" fill="#3574a6"/>
<rect x="37.50" y="125.00" width="12.55" height="12.55" fill="#3574a6"/>
<rect x="50.00" y="125.00" width="12.55" height="12.55" fill="#3574a6"/>
<rect x="87.50" y="125.00" width="12.55" height="12.55" fill="#3574a6"/>
<rect x="100.00" y="125.00" width="12.55" height="12.55" fill="#3574a6"/>
<rect x="112.50" y="125.00" width="12.55" height="12.55" fill="#3574a6"/>
<rect x="50.00" y="137.50" width="12.55" height="12.55" fill="#3574a6"/>
<rect x="62.50" y="137.50" width="12.55" height="12.55" fill="#3574a6"/>
<rect x="75.00" y="137.50" width="12.55" height="12.55" fill="#3574a6"/>
<rect x="87.50" y="137.50" width="12.55" height="12.55" fill="#3574a6"/>
<rect x="100.00" y="137.50" width="12.55" height="12.55" fill="#3574a6"/>
<rect x="50.00" y="150.00" width="12.55" height="12.55" fill="#3574a6"/>
<rect x="62.50" y="150.00" width="12.55" height="12.55" fill="#3574a6"/>
<rect x="75.00" y="150.00" width="12.55" height="12.55" fill="#3574a6"/>
<rect x="87.50" y="150.00" width="12.55" height="12.55" fill="#3574a6"/>
<rect x="50.00" y="162.50" width="12.55" height="12.55" fill="#3574a6"/>
<rect x="62.50" y="162.50" width="12.55" height="12.55" fill="#3574a6"/>
<rect x="75.00" y="162.50" width="12.55" height="12.55" fill="#3574a6"/>
<rect x="87.50" y="162.50" width="12.55" height="12.55" fill="#3574a6"/>
<rect x="37.50" y="175.00" width="12.55" height="12.55" fill="#3574a6"/>
<rect x="50.00" y="175.00" width="12.55" height="12.55" fill="#3574a6"/>
<rect x="62.50" y="175.00" width="12.55" height="12.55" fill="#3574a6"/>
<rect x="75.00" y="175.00" width="12.55" height="12.55" fill="#3574a6"/>
<rect x="87.50" y="175.00" width="12.55" height="12.55" fill="#3574a6"/>
<rect x="100.00" y="175.00" width="12.55" height="12.55" fill="#3574a6"/>
<rect x="25.00" y="187.50" width="12.55" height="12.55" fill="#3574a6"/>
<rect x="37.50" y="187.50" width="12.55" height="12.55" fill="#3574a6"/>
<rect x="50.00" y="187.50" width="12.55" height="12.55" fill="#3574a6"/>
<rect x="87.50" y="187.50" width="12.55" height="12.55" fill="#3574a6"/>
<rect x="100.00" y="187.50" width="12.55" height="12.55" fill="#3574a6"/>
<rect x="112.50" y="187.50" width="12.55" height="12.55" fill="#3574a6"/>
<rect x="12.50" y="200.00" width="12.55" height="12.55" fill="#3574a6"/>
<rect x="25.00" y="200.00" width="12.55" height="12.55" fill="#3574a6"/>
<rect x="37.50" y="200.00" width="12.55" height="12.55" fill="#3574a6"/>
<rect x="100.00" y="200.00" width="12.55" height="12.55" fill="#3574a6"/>
<rect x="112.50" y="200.00" width="12.55" height="12.55" fill="#3574a6"/>
<rect x="125.00" y="200.00" width="12.55" height="12.55" fill="#3574a6"/>
<rect x="0.00" y="212.50" width="12.55" height="12.55" fill="#3574a6"/>
<rect x="12.50" y="212.50" width="12.55" height="12.55" fill="#3574a6"/>
<rect x="25.00" y="212.50" width="12.55" height="12.55" fill="#3574a6"/>
<rect x="112.50" y="212.50" width="12.55" height="12.55" fill="#3574a6"/>
<rect x="125.00" y="212.50" width="12.55" height="12.55" fill="#3574a6"/>
<rect x="137.50" y="212.50" width="12.55" height="12.55" fill="#3574a6"/>
<rect x="0.00" y="225.00" width="12.55" height="12.55" fill="#3574a6"/>
<rect x="12.50" y="225.00" width="12.55" height="12.55" fill="#3574a6"/>
<rect x="25.00" y="225.00" width="12.55" height="12.55" fill="#3574a6"/>
<rect x="37.50" y="225.00" width="12.55" height="12.55" fill="#3574a6"/>
<rect x="100.00" y="225.00" width="12.55" height="12.55" fill="#3574a6"/>
<rect x="112.50" y="225.00" width="12.55" height="12.55" fill="#3574a6"/>
<rect x="125.00" y="225.00" width="12.55" height="12.55" fill="#3574a6"/>
<rect x="137.50" y="225.00" width="12.55" height="12.55" fill="#3574a6"/>
<rect x="0.50" y="0.50" width="11.50" height="11.50" fill="none" stroke="#2d6695" stroke-width="0.6" opacity="0.22"/>
<rect x="13.00" y="0.50" width="11.50" height="11.50" fill="none" stroke="#2d6695" stroke-width="0.6" opacity="0.22"/>
<rect x="125.50" y="0.50" width="11.50" height="11.50" fill="none" stroke="#2d6695" stroke-width="0.6" opacity="0.22"/>
<rect x="138.00" y="0.50" width="11.50" height="11.50" fill="none" stroke="#2d6695" stroke-width="0.6" opacity="0.22"/>
<rect x="0.50" y="13.00" width="11.50" height="11.50" fill="none" stroke="#2d6695" stroke-width="0.6" opacity="0.22"/>
<rect x="13.00" y="13.00" width="11.50" height="11.50" fill="none" stroke="#2d6695" stroke-width="0.6" opacity="0.22"/>
<rect x="125.50" y="13.00" width="11.50" height="11.50" fill="none" stroke="#2d6695" stroke-width="0.6" opacity="0.22"/>
<rect x="138.00" y="13.00" width="11.50" height="11.50" fill="none" stroke="#2d6695" stroke-width="0.6" opacity="0.22"/>
<rect x="0.50" y="25.50" width="11.50" height="11.50" fill="none" stroke="#2d6695" stroke-width="0.6" opacity="0.22"/>
<rect x="13.00" y="25.50" width="11.50" height="11.50" fill="none" stroke="#2d6695" stroke-width="0.6" opacity="0.22"/>
<rect x="125.50" y="25.50" width="11.50" height="11.50" fill="none" stroke="#2d6695" stroke-width="0.6" opacity="0.22"/>
<rect x="138.00" y="25.50" width="11.50" height="11.50" fill="none" stroke="#2d6695" stroke-width="0.6" opacity="0.22"/>
<rect x="0.50" y="38.00" width="11.50" height="11.50" fill="none" stroke="#2d6695" stroke-width="0.6" opacity="0.22"/>
<rect x="13.00" y="38.00" width="11.50" height="11.50" fill="none" stroke="#2d6695" stroke-width="0.6" opacity="0.22"/>
<rect x="125.50" y="38.00" width="11.50" height="11.50" fill="none" stroke="#2d6695" stroke-width="0.6" opacity="0.22"/>
<rect x="138.00" y="38.00" width="11.50" height="11.50" fill="none" stroke="#2d6695" stroke-width="0.6" opacity="0.22"/>
<rect x="0.50" y="50.50" width="11.50" height="11.50" fill="none" stroke="#2d6695" stroke-width="0.6" opacity="0.22"/>
<rect x="13.00" y="50.50" width="11.50" height="11.50" fill="none" stroke="#2d6695" stroke-width="0.6" opacity="0.22"/>
<rect x="125.50" y="50.50" width="11.50" height="11.50" fill="none" stroke="#2d6695" stroke-width="0.6" opacity="0.22"/>
<rect x="138.00" y="50.50" width="11.50" height="11.50" fill="none" stroke="#2d6695" stroke-width="0.6" opacity="0.22"/>
<rect x="0.50" y="63.00" width="11.50" height="11.50" fill="none" stroke="#2d6695" stroke-width="0.6" opacity="0.22"/>
<rect x="13.00" y="63.00" width="11.50" height="11.50" fill="none" stroke="#2d6695" stroke-width="0.6" opacity="0.22"/>
<rect x="125.50" y="63.00" width="11.50" height="11.50" fill="none" stroke="#2d6695" stroke-width="0.6" opacity="0.22"/>
<rect x="138.00" y="63.00" width="11.50" height="11.50" fill="none" stroke="#2d6695" stroke-width="0.6" opacity="0.22"/>
<rect x="0.50" y="75.50" width="11.50" height="11.50" fill="none" stroke="#2d6695" stroke-width="0.6" opacity="0.22"/>
<rect x="13.00" y="75.50" width="11.50" height="11.50" fill="none" stroke="#2d6695" stroke-width="0.6" opacity="0.22"/>
<rect x="125.50" y="75.50" width="11.50" height="11.50" fill="none" stroke="#2d6695" stroke-width="0.6" opacity="0.22"/>
<rect x="138.00" y="75.50" width="11.50" height="11.50" fill="none" stroke="#2d6695" stroke-width="0.6" opacity="0.22"/>
<rect x="0.50" y="88.00" width="11.50" height="11.50" fill="none" stroke="#2d6695" stroke-width="0.6" opacity="0.22"/>
<rect x="13.00" y="88.00" width="11.50" height="11.50" fill="none" stroke="#2d6695" stroke-width="0.6" opacity="0.22"/>
<rect x="125.50" y="88.00" width="11.50" height="11.50" fill="none" stroke="#2d6695" stroke-width="0.6" opacity="0.22"/>
<rect x="138.00" y="88.00" width="11.50" height="11.50" fill="none" stroke="#2d6695" stroke-width="0.6" opacity="0.22"/>
<rect x="0.50" y="100.50" width="11.50" height="11.50" fill="none" stroke="#2d6695" stroke-width="0.6" opacity="0.22"/>
<rect x="13.00" y="100.50" width="11.50" height="11.50" fill="none" stroke="#2d6695" stroke-width="0.6" opacity="0.22"/>
<rect x="25.50" y="100.50" width="11.50" height="11.50" fill="none" stroke="#2d6695" stroke-width="0.6" opacity="0.22"/>
<rect x="113.00" y="100.50" width="11.50" height="11.50" fill="none" stroke="#2d6695" stroke-width="0.6" opacity="0.22"/>
<rect x="125.50" y="100.50" width="11.50" height="11.50" fill="none" stroke="#2d6695" stroke-width="0.6" opacity="0.22"/>
<rect x="138.00" y="100.50" width="11.50" height="11.50" fill="none" stroke="#2d6695" stroke-width="0.6" opacity="0.22"/>
<rect x="13.00" y="113.00" width="11.50" height="11.50" fill="none" stroke="#2d6695" stroke-width="0.6" opacity="0.22"/>
<rect x="25.50" y="113.00" width="11.50" height="11.50" fill="none" stroke="#2d6695" stroke-width="0.6" opacity="0.22"/>
<rect x="38.00" y="113.00" width="11.50" height="11.50" fill="none" stroke="#2d6695" stroke-width="0.6" opacity="0.22"/>
<rect x="100.50" y="113.00" width="11.50" height="11.50" fill="none" stroke="#2d6695" stroke-width="0.6" opacity="0.22"/>
<rect x="113.00" y="113.00" width="11.50" height="11.50" fill="none" stroke="#2d6695" stroke-width="0.6" opacity="0.22"/>
<rect x="125.50" y="113.00" width="11.50" height="11.50" fill="none" stroke="#2d6695" stroke-width="0.6" opacity="0.22"/>
<rect x="25.50" y="125.50" width="11.50" height="11.50" fill="none" stroke="#2d6695" stroke-width="0.6" opacity="0.22"/>
<rect x="38.00" y="125.50" width="11.50" height="11.50" fill="none" stroke="#2d6695" stroke-width="0.6" opacity="0.22"/>
<rect x="50.50" y="125.50" width="11.50" height="11.50" fill="none" stroke="#2d6695" stroke-width="0.6" opacity="0.22"/>
<rect x="88.00" y="125.50" width="11.50" height="11.50" fill="none" stroke="#2d6695" stroke-width="0.6" opacity="0.22"/>
<rect x="100.50" y="125.50" width="11.50" height="11.50" fill="none" stroke="#2d6695" stroke-width="0.6" opacity="0.22"/>
<rect x="113.00" y="125.50" width="11.50" height="11.50" fill="none" stroke="#2d6695" stroke-width="0.6" opacity="0.22"/>
<rect x="50.50" y="138.00" width="11.50" height="11.50" fill="none" stroke="#2d6695" stroke-width="0.6" opacity="0.22"/>
<rect x="63.00" y="138.00" width="11.50" height="11.50" fill="none" stroke="#2d6695" stroke-width="0.6" opacity="0.22"/>
<rect x="75.50" y="138.00" width="11.50" height="11.50" fill="none" stroke="#2d6695" stroke-width="0.6" opacity="0.22"/>
<rect x="88.00" y="138.00" width="11.50" height="11.50" fill="none" stroke="#2d6695" stroke-width="0.6" opacity="0.22"/>
<rect x="100.50" y="138.00" width="11.50" height="11.50" fill="none" stroke="#2d6695" stroke-width="0.6" opacity="0.22"/>
<rect x="50.50" y="150.50" width="11.50" height="11.50" fill="none" stroke="#2d6695" stroke-width="0.6" opacity="0.22"/>
<rect x="63.00" y="150.50" width="11.50" height="11.50" fill="none" stroke="#2d6695" stroke-width="0.6" opacity="0.22"/>
<rect x="75.50" y="150.50" width="11.50" height="11.50" fill="none" stroke="#2d6695" stroke-width="0.6" opacity="0.22"/>
<rect x="88.00" y="150.50" width="11.50" height="11.50" fill="none" stroke="#2d6695" stroke-width="0.6" opacity="0.22"/>
<rect x="50.50" y="163.00" width="11.50" height="11.50" fill="none" stroke="#2d6695" stroke-width="0.6" opacity="0.22"/>
<rect x="63.00" y="163.00" width="11.50" height="11.50" fill="none" stroke="#2d6695" stroke-width="0.6" opacity="0.22"/>
<rect x="75.50" y="163.00" width="11.50" height="11.50" fill="none" stroke="#2d6695" stroke-width="0.6" opacity="0.22"/>
<rect x="88.00" y="163.00" width="11.50" height="11.50" fill="none" stroke="#2d6695" stroke-width="0.6" opacity="0.22"/>
<rect x="38.00" y="175.50" width="11.50" height="11.50" fill="none" stroke="#2d6695" stroke-width="0.6" opacity="0.22"/>
<rect x="50.50" y="175.50" width="11.50" height="11.50" fill="none" stroke="#2d6695" stroke-width="0.6" opacity="0.22"/>
<rect x="63.00" y="175.50" width="11.50" height="11.50" fill="none" stroke="#2d6695" stroke-width="0.6" opacity="0.22"/>
<rect x="75.50" y="175.50" width="11.50" height="11.50" fill="none" stroke="#2d6695" stroke-width="0.6" opacity="0.22"/>
<rect x="88.00" y="175.50" width="11.50" height="11.50" fill="none" stroke="#2d6695" stroke-width="0.6" opacity="0.22"/>
<rect x="100.50" y="175.50" width="11.50" height="11.50" fill="none" stroke="#2d6695" stroke-width="0.6" opacity="0.22"/>
<rect x="25.50" y="188.00" width="11.50" height="11.50" fill="none" stroke="#2d6695" stroke-width="0.6" opacity="0.22"/>
<rect x="38.00" y="188.00" width="11.50" height="11.50" fill="none" stroke="#2d6695" stroke-width="0.6" opacity="0.22"/>
<rect x="50.50" y="188.00" width="11.50" height="11.50" fill="none" stroke="#2d6695" stroke-width="0.6" opacity="0.22"/>
<rect x="88.00" y="188.00" width="11.50" height="11.50" fill="none" stroke="#2d6695" stroke-width="0.6" opacity="0.22"/>
<rect x="100.50" y="188.00" width="11.50" height="11.50" fill="none" stroke="#2d6695" stroke-width="0.6" opacity="0.22"/>
<rect x="113.00" y="188.00" width="11.50" height="11.50" fill="none" stroke="#2d6695" stroke-width="0.6" opacity="0.22"/>
<rect x="13.00" y="200.50" width="11.50" height="11.50" fill="none" stroke="#2d6695" stroke-width="0.6" opacity="0.22"/>
<rect x="25.50" y="200.50" width="11.50" height="11.50" fill="none" stroke="#2d6695" stroke-width="0.6" opacity="0.22"/>
<rect x="38.00" y="200.50" width="11.50" height="11.50" fill="none" stroke="#2d6695" stroke-width="0.6" opacity="0.22"/>
<rect x="100.50" y="200.50" width="11.50" height="11.50" fill="none" stroke="#2d6695" stroke-width="0.6" opacity="0.22"/>
<rect x="113.00" y="200.50" width="11.50" height="11.50" fill="none" stroke="#2d6695" stroke-width="0.6" opacity="0.22"/>
<rect x="125.50" y="200.50" width="11.50" height="11.50" fill="none" stroke="#2d6695" stroke-width="0.6" opacity="0.22"/>
<rect x="0.50" y="213.00" width="11.50" height="11.50" fill="none" stroke="#2d6695" stroke-width="0.6" opacity="0.22"/>
<rect x="13.00" y="213.00" width="11.50" height="11.50" fill="none" stroke="#2d6695" stroke-width="0.6" opacity="0.22"/>
<rect x="25.50" y="213.00" width="11.50" height="11.50" fill="none" stroke="#2d6695" stroke-width="0.6" opacity="0.22"/>
<rect x="113.00" y="213.00" width="11.50" height="11.50" fill="none" stroke="#2d6695" stroke-width="0.6" opacity="0.22"/>
<rect x="125.50" y="213.00" width="11.50" height="11.50" fill="none" stroke="#2d6695" stroke-width="0.6" opacity="0.22"/>
<rect x="138.00" y="213.00" width="11.50" height="11.50" fill="none" stroke="#2d6695" stroke-width="0.6" opacity="0.22"/>
<rect x="0.50" y="225.50" width="11.50" height="11.50" fill="none" stroke="#2d6695" stroke-width="0.6" opacity="0.22"/>
<rect x="13.00" y="225.50" width="11.50" height="11.50" fill="none" stroke="#2d6695" stroke-width="0.6" opacity="0.22"/>
<rect x="25.50" y="225.50" width="11.50" height="11.50" fill="none" stroke="#2d6695" stroke-width="0.6" opacity="0.22"/>
<rect x="38.00" y="225.50" width="11.50" height="11.50" fill="none" stroke="#2d6695" stroke-width="0.6" opacity="0.22"/>
<rect x="100.50" y="225.50" width="11.50" height="11.50" fill="none" stroke="#2d6695" stroke-width="0.6" opacity="0.22"/>
<rect x="113.00" y="225.50" width="11.50" height="11.50" fill="none" stroke="#2d6695" stroke-width="0.6" opacity="0.22"/>
<rect x="125.50" y="225.50" width="11.50" height="11.50" fill="none" stroke="#2d6695" stroke-width="0.6" opacity="0.22"/>
<rect x="138.00" y="225.50" width="11.50" height="11.50" fill="none" stroke="#2d6695" stroke-width="0.6" opacity="0.22"/>
<rect x="12.50" y="25.00" width="2.50" height="48.75" fill="#888" opacity="0.95"/>
<rect x="22.75" y="25.00" width="2.25" height="48.75" fill="#888" opacity="0.95"/>
<rect x="14.75" y="12.50" width="8.25" height="73.75" fill="#5ab8da" rx="1"/>
<rect x="17.00" y="13.75" width="3.50" height="71.25" fill="#ffffff" opacity="0.22"/>
<rect x="125.00" y="25.00" width="2.50" height="48.75" fill="#888" opacity="0.95"/>
<rect x="135.25" y="25.00" width="2.25" height="48.75" fill="#888" opacity="0.95"/>
<rect x="127.25" y="12.50" width="8.25" height="73.75" fill="#5ab8da" rx="1"/>
<rect x="129.50" y="13.75" width="3.50" height="71.25" fill="#ffffff" opacity="0.22"/>
<rect x="25.00" y="225.00" width="25.00" height="12.50" fill="#000"/>
<rect x="25.00" y="225.62" width="25.00" height="8.75" fill="#5ab8da" rx="1"/>
<rect x="25.00" y="234.38" width="25.00" height="3.12" fill="#777"/>
<rect x="100.00" y="225.00" width="25.00" height="12.50" fill="#000"/>
<rect x="100.00" y="225.62" width="25.00" height="8.75" fill="#5ab8da" rx="1"/>
<rect x="100.00" y="234.38" width="25.00" height="3.12" fill="#777"/>
</svg>
<div class="a" style="left:454px;top:99px;width:774.4px;height:8.4px;background:linear-gradient(#4db0e0 0%,#4db0e0 45%,#2d78b0 55%,#2d78b0 100%)"></div>
<div class="a" style="left:454px;top:485.5px;width:774.4px;height:8.5px;background:linear-gradient(#4db0e0 0%,#4db0e0 45%,#2d78b0 55%,#2d78b0 100%)"></div>
<div class="a" style="left:444px;top:109px;width:8px;height:375px;background:linear-gradient(90deg,#2d78b0 0%,#2d78b0 45%,#4db0e0 55%,#4db0e0 100%)"></div>
<div class="a" style="left:1230.5px;top:109px;width:7.8px;height:375px;background:linear-gradient(90deg,#2d78b0 0%,#2d78b0 45%,#4db0e0 55%,#4db0e0 100%)"></div>
<div class="a" style="left:441.5px;top:96.5px;width:12.3px;height:12.3px;background:#2f78ae"></div>
<div class="a" style="left:1228.4px;top:96.5px;width:12.3px;height:12.3px;background:#2f78ae"></div>
<div class="a" style="left:441.5px;top:484px;width:12.3px;height:12.3px;background:#2f78ae"></div>
<div class="a" style="left:1228.4px;top:484px;width:12.3px;height:12.3px;background:#2f78ae"></div>
<div class="a" style="left:629px;top:97.5px;width:25px;height:11px;background:#2f78ae"></div>
<div class="a" style="left:629px;top:484.5px;width:25px;height:11px;background:#2f78ae"></div>
<div class="a" style="left:829px;top:97.5px;width:25px;height:11px;background:#2f78ae"></div>
<div class="a" style="left:829px;top:484.5px;width:25px;height:11px;background:#2f78ae"></div>
<div class="a" style="left:1029px;top:97.5px;width:25px;height:11px;background:#2f78ae"></div>
<div class="a" style="left:1029px;top:484.5px;width:25px;height:11px;background:#2f78ae"></div>
<div class="a" style="left:442.5px;top:284px;width:11px;height:12.5px;background:#2f78ae"></div>
<div class="a" style="left:1229px;top:284px;width:11px;height:12.5px;background:#2f78ae"></div>
<svg class="a" style="left:0;top:0" width="1600" height="985"><path d="M447.94 96.50V496.10M454.18 96.50V496.10M460.42 96.50V496.10M466.66 96.50V496.10M472.91 96.50V496.10M479.15 96.50V496.10M485.39 96.50V496.10M497.87 96.50V496.10M504.11 96.50V496.10M510.35 96.50V496.10M516.60 96.50V496.10M522.84 96.50V496.10M529.08 96.50V496.10M535.32 96.50V496.10M547.80 96.50V496.10M554.04 96.50V496.10M560.28 96.50V496.10M566.52 96.50V496.10M572.77 96.50V496.10M579.01 96.50V496.10M585.25 96.50V496.10M597.73 96.50V496.10M603.97 96.50V496.10M610.21 96.50V496.10M616.45 96.50V496.10M622.70 96.50V496.10M628.94 96.50V496.10M635.18 96.50V496.10M647.66 96.50V496.10M653.90 96.50V496.10M660.14 96.50V496.10M666.38 96.50V496.10M672.63 96.50V496.10M678.87 96.50V496.10M685.11 96.50V496.10M697.59 96.50V496.10M703.83 96.50V496.10M710.07 96.50V496.10M716.32 96.50V496.10M722.56 96.50V496.10M728.80 96.50V496.10M735.04 96.50V496.10M747.52 96.50V496.10M753.76 96.50V496.10M760.00 96.50V496.10M766.25 96.50V496.10M772.49 96.50V496.10M778.73 96.50V496.10M784.97 96.50V496.10M797.45 96.50V496.10M803.69 96.50V496.10M809.93 96.50V496.10M816.17 96.50V496.10M822.42 96.50V496.10M828.66 96.50V496.10M834.90 96.50V496.10M847.38 96.50V496.10M853.62 96.50V496.10M859.86 96.50V496.10M866.11 96.50V496.10M872.35 96.50V496.10M878.59 96.50V496.10M884.83 96.50V496.10M897.31 96.50V496.10M903.55 96.50V496.10M909.79 96.50V496.10M916.03 96.50V496.10M922.28 96.50V496.10M928.52 96.50V496.10M934.76 96.50V496.10M947.24 96.50V496.10M953.48 96.50V496.10M959.72 96.50V496.10M965.96 96.50V496.10M972.21 96.50V496.10M978.45 96.50V496.10M984.69 96.50V496.10M997.17 96.50V496.10M1003.41 96.50V496.10M1009.65 96.50V496.10M1015.89 96.50V496.10M1022.14 96.50V496.10M1028.38 96.50V496.10M1034.62 96.50V496.10M1047.10 96.50V496.10M1053.34 96.50V496.10M1059.58 96.50V496.10M1065.83 96.50V496.10M1072.07 96.50V496.10M1078.31 96.50V496.10M1084.55 96.50V496.10M1097.03 96.50V496.10M1103.27 96.50V496.10M1109.51 96.50V496.10M1115.75 96.50V496.10M1122.00 96.50V496.10M1128.24 96.50V496.10M1134.48 96.50V496.10M1146.96 96.50V496.10M1153.20 96.50V496.10M1159.44 96.50V496.10M1165.68 96.50V496.10M1171.93 96.50V496.10M1178.17 96.50V496.10M1184.41 96.50V496.10M1196.89 96.50V496.10M1203.13 96.50V496.10M1209.37 96.50V496.10M1215.62 96.50V496.10M1221.86 96.50V496.10M1228.10 96.50V496.10M1234.34 96.50V496.10M441.50 103.14H1240.50M441.50 109.38H1240.50M441.50 115.62H1240.50M441.50 121.87H1240.50M441.50 128.11H1240.50M441.50 134.35H1240.50M441.50 140.59H1240.50M441.50 153.07H1240.50M441.50 159.31H1240.50M441.50 165.55H1240.50M441.50 171.80H1240.50M441.50 178.04H1240.50M441.50 184.28H1240.50M441.50 190.52H1240.50M441.50 203.00H1240.50M441.50 209.24H1240.50M441.50 215.48H1240.50M441.50 221.73H1240.50M441.50 227.97H1240.50M441.50 234.21H1240.50M441.50 240.45H1240.50M441.50 252.93H1240.50M441.50 259.17H1240.50M441.50 265.41H1240.50M441.50 271.65H1240.50M441.50 277.90H1240.50M441.50 284.14H1240.50M441.50 290.38H1240.50M441.50 302.86H1240.50M441.50 309.10H1240.50M441.50 315.34H1240.50M441.50 321.59H1240.50M441.50 327.83H1240.50M441.50 334.07H1240.50M441.50 340.31H1240.50M441.50 352.79H1240.50M441.50 359.03H1240.50M441.50 365.27H1240.50M441.50 371.51H1240.50M441.50 377.76H1240.50M441.50 384.00H1240.50M441.50 390.24H1240.50M441.50 402.72H1240.50M441.50 408.96H1240.50M441.50 415.20H1240.50M441.50 421.45H1240.50M441.50 427.69H1240.50M441.50 433.93H1240.50M441.50 440.17H1240.50M441.50 452.65H1240.50M441.50 458.89H1240.50M441.50 465.13H1240.50M441.50 471.38H1240.50M441.50 477.62H1240.50M441.50 483.86H1240.50M441.50 490.10H1240.50" stroke="#ffffff" stroke-opacity="0.3" stroke-width="1.35" fill="none"/><path d="M441.70 96.50V496.10M491.63 96.50V496.10M541.56 96.50V496.10M591.49 96.50V496.10M641.42 96.50V496.10M691.35 96.50V496.10M741.28 96.50V496.10M791.21 96.50V496.10M841.14 96.50V496.10M891.07 96.50V496.10M941.00 96.50V496.10M990.93 96.50V496.10M1040.86 96.50V496.10M1090.79 96.50V496.10M1140.72 96.50V496.10M1190.65 96.50V496.10M1240.58 96.50V496.10M441.50 96.90H1240.50M441.50 146.83H1240.50M441.50 196.76H1240.50M441.50 246.69H1240.50M441.50 296.62H1240.50M441.50 346.55H1240.50M441.50 396.48H1240.50M441.50 446.41H1240.50M441.50 496.34H1240.50" stroke="#ffffff" stroke-opacity="0.5" stroke-width="1.35" fill="none"/></svg>
<div class="a" style="left:369.6px;top:11px;width:1230.4px;height:17.2px;background:#1f2228"></div>
<div class="a" style="left:369.6px;top:28.2px;width:16.8px;height:630.5999999999999px;background:#1f2228"></div>
<div class="a" style="left:369.6px;top:11px;width:16.8px;height:17.2px;background:#7b7c7e"></div>
<svg class="a" style="left:0;top:0" width="1600" height="985"><path d="M386.78 22.7V28.2M391.77 8.5V28.2M396.76 22.7V28.2M401.76 22.7V28.2M406.75 22.7V28.2M411.74 22.7V28.2M416.74 14.8V28.2M421.73 22.7V28.2M426.72 22.7V28.2M431.71 22.7V28.2M436.71 22.7V28.2M441.70 8.5V28.2M446.69 22.7V28.2M451.69 22.7V28.2M456.68 22.7V28.2M461.67 22.7V28.2M466.66 14.8V28.2M471.66 22.7V28.2M476.65 22.7V28.2M481.64 22.7V28.2M486.64 22.7V28.2M491.63 8.5V28.2M496.62 22.7V28.2M501.62 22.7V28.2M506.61 22.7V28.2M511.60 22.7V28.2M516.60 14.8V28.2M521.59 22.7V28.2M526.58 22.7V28.2M531.57 22.7V28.2M536.57 22.7V28.2M541.56 8.5V28.2M546.55 22.7V28.2M551.55 22.7V28.2M556.54 22.7V28.2M561.53 22.7V28.2M566.52 14.8V28.2M571.52 22.7V28.2M576.51 22.7V28.2M581.50 22.7V28.2M586.50 22.7V28.2M591.49 8.5V28.2M596.48 22.7V28.2M601.48 22.7V28.2M606.47 22.7V28.2M611.46 22.7V28.2M616.46 14.8V28.2M621.45 22.7V28.2M626.44 22.7V28.2M631.43 22.7V28.2M636.43 22.7V28.2M641.42 8.5V28.2M646.41 22.7V28.2M651.41 22.7V28.2M656.40 22.7V28.2M661.39 22.7V28.2M666.38 14.8V28.2M671.38 22.7V28.2M676.37 22.7V28.2M681.36 22.7V28.2M686.36 22.7V28.2M691.35 8.5V28.2M696.34 22.7V28.2M701.34 22.7V28.2M706.33 22.7V28.2M711.32 22.7V28.2M716.32 14.8V28.2M721.31 22.7V28.2M726.30 22.7V28.2M731.29 22.7V28.2M736.29 22.7V28.2M741.28 8.5V28.2M746.27 22.7V28.2M751.27 22.7V28.2M756.26 22.7V28.2M761.25 22.7V28.2M766.25 14.8V28.2M771.24 22.7V28.2M776.23 22.7V28.2M781.22 22.7V28.2M786.22 22.7V28.2M791.21 8.5V28.2M796.20 22.7V28.2M801.20 22.7V28.2M806.19 22.7V28.2M811.18 22.7V28.2M816.17 14.8V28.2M821.17 22.7V28.2M826.16 22.7V28.2M831.15 22.7V28.2M836.15 22.7V28.2M841.14 8.5V28.2M846.13 22.7V28.2M851.13 22.7V28.2M856.12 22.7V28.2M861.11 22.7V28.2M866.11 14.8V28.2M871.10 22.7V28.2M876.09 22.7V28.2M881.08 22.7V28.2M886.08 22.7V28.2M891.07 8.5V28.2M896.06 22.7V28.2M901.06 22.7V28.2M906.05 22.7V28.2M911.04 22.7V28.2M916.04 14.8V28.2M921.03 22.7V28.2M926.02 22.7V28.2M931.01 22.7V28.2M936.01 22.7V28.2M941.00 8.5V28.2M945.99 22.7V28.2M950.99 22.7V28.2M955.98 22.7V28.2M960.97 22.7V28.2M965.96 14.8V28.2M970.96 22.7V28.2M975.95 22.7V28.2M980.94 22.7V28.2M985.94 22.7V28.2M990.93 8.5V28.2M995.92 22.7V28.2M1000.92 22.7V28.2M1005.91 22.7V28.2M1010.90 22.7V28.2M1015.89 14.8V28.2M1020.89 22.7V28.2M1025.88 22.7V28.2M1030.87 22.7V28.2M1035.87 22.7V28.2M1040.86 8.5V28.2M1045.85 22.7V28.2M1050.85 22.7V28.2M1055.84 22.7V28.2M1060.83 22.7V28.2M1065.83 14.8V28.2M1070.82 22.7V28.2M1075.81 22.7V28.2M1080.80 22.7V28.2M1085.80 22.7V28.2M1090.79 8.5V28.2M1095.78 22.7V28.2M1100.78 22.7V28.2M1105.77 22.7V28.2M1110.76 22.7V28.2M1115.76 14.8V28.2M1120.75 22.7V28.2M1125.74 22.7V28.2M1130.73 22.7V28.2M1135.73 22.7V28.2M1140.72 8.5V28.2M1145.71 22.7V28.2M1150.71 22.7V28.2M1155.70 22.7V28.2M1160.69 22.7V28.2M1165.68 14.8V28.2M1170.68 22.7V28.2M1175.67 22.7V28.2M1180.66 22.7V28.2M1185.66 22.7V28.2M1190.65 8.5V28.2M1195.64 22.7V28.2M1200.64 22.7V28.2M1205.63 22.7V28.2M1210.62 22.7V28.2M1215.62 14.8V28.2M1220.61 22.7V28.2M1225.60 22.7V28.2M1230.59 22.7V28.2M1235.59 22.7V28.2M1240.58 8.5V28.2M1245.57 22.7V28.2M1250.57 22.7V28.2M1255.56 22.7V28.2M1260.55 22.7V28.2M1265.55 14.8V28.2M1270.54 22.7V28.2M1275.53 22.7V28.2M1280.52 22.7V28.2M1285.52 22.7V28.2M1290.51 8.5V28.2M1295.50 22.7V28.2M1300.50 22.7V28.2M1305.49 22.7V28.2M1310.48 22.7V28.2M1315.48 14.8V28.2M1320.47 22.7V28.2M1325.46 22.7V28.2M1330.45 22.7V28.2M1335.45 22.7V28.2M1340.44 8.5V28.2M1345.43 22.7V28.2M1350.43 22.7V28.2M1355.42 22.7V28.2M1360.41 22.7V28.2M1365.40 14.8V28.2M1370.40 22.7V28.2M1375.39 22.7V28.2M1380.38 22.7V28.2M1385.38 22.7V28.2M1390.37 8.5V28.2M1395.36 22.7V28.2M1400.36 22.7V28.2M1405.35 22.7V28.2M1410.34 22.7V28.2M1415.34 14.8V28.2M1420.33 22.7V28.2M1425.32 22.7V28.2M1430.31 22.7V28.2M1435.31 22.7V28.2M1440.30 8.5V28.2M1445.29 22.7V28.2M1450.29 22.7V28.2M1455.28 22.7V28.2M1460.27 22.7V28.2M1465.27 14.8V28.2M1470.26 22.7V28.2M1475.25 22.7V28.2M1480.24 22.7V28.2M1485.24 22.7V28.2M1490.23 8.5V28.2M1495.22 22.7V28.2M1500.22 22.7V28.2M1505.21 22.7V28.2M1510.20 22.7V28.2M1515.20 14.8V28.2M1520.19 22.7V28.2M1525.18 22.7V28.2M1530.17 22.7V28.2M1535.17 22.7V28.2M1540.16 8.5V28.2M1545.15 22.7V28.2M1550.15 22.7V28.2M1555.14 22.7V28.2M1560.13 22.7V28.2M1565.13 14.8V28.2M1570.12 22.7V28.2M1575.11 22.7V28.2M1580.10 22.7V28.2M1585.10 22.7V28.2M1590.09 8.5V28.2M1595.08 22.7V28.2M1600.08 22.7V28.2M381.3 31.99H386.4M381.3 36.98H386.4M381.3 41.98H386.4M367.5 46.97H386.4M381.3 51.96H386.4M381.3 56.96H386.4M381.3 61.95H386.4M381.3 66.94H386.4M373.7 71.94H386.4M381.3 76.93H386.4M381.3 81.92H386.4M381.3 86.91H386.4M381.3 91.91H386.4M367.5 96.90H386.4M381.3 101.89H386.4M381.3 106.89H386.4M381.3 111.88H386.4M381.3 116.87H386.4M373.7 121.87H386.4M381.3 126.86H386.4M381.3 131.85H386.4M381.3 136.84H386.4M381.3 141.84H386.4M367.5 146.83H386.4M381.3 151.82H386.4M381.3 156.82H386.4M381.3 161.81H386.4M381.3 166.80H386.4M373.7 171.80H386.4M381.3 176.79H386.4M381.3 181.78H386.4M381.3 186.77H386.4M381.3 191.77H386.4M367.5 196.76H386.4M381.3 201.75H386.4M381.3 206.75H386.4M381.3 211.74H386.4M381.3 216.73H386.4M373.7 221.73H386.4M381.3 226.72H386.4M381.3 231.71H386.4M381.3 236.70H386.4M381.3 241.70H386.4M367.5 246.69H386.4M381.3 251.68H386.4M381.3 256.68H386.4M381.3 261.67H386.4M381.3 266.66H386.4M373.7 271.66H386.4M381.3 276.65H386.4M381.3 281.64H386.4M381.3 286.63H386.4M381.3 291.63H386.4M367.5 296.62H386.4M381.3 301.61H386.4M381.3 306.61H386.4M381.3 311.60H386.4M381.3 316.59H386.4M373.7 321.59H386.4M381.3 326.58H386.4M381.3 331.57H386.4M381.3 336.56H386.4M381.3 341.56H386.4M367.5 346.55H386.4M381.3 351.54H386.4M381.3 356.54H386.4M381.3 361.53H386.4M381.3 366.52H386.4M373.7 371.51H386.4M381.3 376.51H386.4M381.3 381.50H386.4M381.3 386.49H386.4M381.3 391.49H386.4M367.5 396.48H386.4M381.3 401.47H386.4M381.3 406.47H386.4M381.3 411.46H386.4M381.3 416.45H386.4M373.7 421.45H386.4M381.3 426.44H386.4M381.3 431.43H386.4M381.3 436.42H386.4M381.3 441.42H386.4M367.5 446.41H386.4M381.3 451.40H386.4M381.3 456.40H386.4M381.3 461.39H386.4M381.3 466.38H386.4M373.7 471.38H386.4M381.3 476.37H386.4M381.3 481.36H386.4M381.3 486.35H386.4M381.3 491.35H386.4M367.5 496.34H386.4M381.3 501.33H386.4M381.3 506.33H386.4M381.3 511.32H386.4M381.3 516.31H386.4M373.7 521.31H386.4M381.3 526.30H386.4M381.3 531.29H386.4M381.3 536.28H386.4M381.3 541.28H386.4M367.5 546.27H386.4M381.3 551.26H386.4M381.3 556.26H386.4M381.3 561.25H386.4M381.3 566.24H386.4M373.7 571.24H386.4M381.3 576.23H386.4M381.3 581.22H386.4M381.3 586.21H386.4M381.3 591.21H386.4M367.5 596.20H386.4M381.3 601.19H386.4M381.3 606.19H386.4M381.3 611.18H386.4M381.3 616.17H386.4M373.7 621.16H386.4M381.3 626.16H386.4M381.3 631.15H386.4M381.3 636.14H386.4M381.3 641.14H386.4M367.5 646.13H386.4M381.3 651.12H386.4M381.3 656.12H386.4" stroke="#8a8c90" stroke-width="1.1" fill="none"/></svg>
<div class="t" style="left:392.97px;top:13.6px;font-size:10.5px;color:#c8c9cb">-64</div>
<div class="t" style="left:442.90px;top:13.6px;font-size:10.5px;color:#c8c9cb">0</div>
<div class="t" style="left:492.83px;top:13.6px;font-size:10.5px;color:#c8c9cb">64</div>
<div class="t" style="left:542.76px;top:13.6px;font-size:10.5px;color:#c8c9cb">128</div>
<div class="t" style="left:592.69px;top:13.6px;font-size:10.5px;color:#c8c9cb">192</div>
<div class="t" style="left:642.62px;top:13.6px;font-size:10.5px;color:#c8c9cb">256</div>
<div class="t" style="left:692.55px;top:13.6px;font-size:10.5px;color:#c8c9cb">320</div>
<div class="t" style="left:742.48px;top:13.6px;font-size:10.5px;color:#c8c9cb">384</div>
<div class="t" style="left:792.41px;top:13.6px;font-size:10.5px;color:#c8c9cb">448</div>
<div class="t" style="left:842.34px;top:13.6px;font-size:10.5px;color:#c8c9cb">512</div>
<div class="t" style="left:892.27px;top:13.6px;font-size:10.5px;color:#c8c9cb">576</div>
<div class="t" style="left:942.20px;top:13.6px;font-size:10.5px;color:#c8c9cb">640</div>
<div class="t" style="left:992.13px;top:13.6px;font-size:10.5px;color:#c8c9cb">704</div>
<div class="t" style="left:1042.06px;top:13.6px;font-size:10.5px;color:#c8c9cb">768</div>
<div class="t" style="left:1091.99px;top:13.6px;font-size:10.5px;color:#c8c9cb">832</div>
<div class="t" style="left:1141.92px;top:13.6px;font-size:10.5px;color:#c8c9cb">896</div>
<div class="t" style="left:1191.85px;top:13.6px;font-size:10.5px;color:#c8c9cb">960</div>
<div class="t" style="left:1241.78px;top:13.6px;font-size:10.5px;color:#c8c9cb">1024</div>
<div class="t" style="left:1291.71px;top:13.6px;font-size:10.5px;color:#c8c9cb">1088</div>
<div class="t" style="left:1341.64px;top:13.6px;font-size:10.5px;color:#c8c9cb">1152</div>
<div class="t" style="left:1391.57px;top:13.6px;font-size:10.5px;color:#c8c9cb">1216</div>
<div class="t" style="left:1441.50px;top:13.6px;font-size:10.5px;color:#c8c9cb">1280</div>
<div class="t" style="left:1491.43px;top:13.6px;font-size:10.5px;color:#c8c9cb">1344</div>
<div class="t" style="left:1541.36px;top:13.6px;font-size:10.5px;color:#c8c9cb">1408</div>
<div class="t" style="left:1591.29px;top:13.6px;font-size:10.5px;color:#c8c9cb">1472</div>
<div class="t" style="left:373.2px;top:45.47px;font-size:10.5px;color:#c8c9cb;transform-origin:0 0;transform:rotate(-90deg)">-64</div>
<div class="t" style="left:373.2px;top:95.40px;font-size:10.5px;color:#c8c9cb;transform-origin:0 0;transform:rotate(-90deg)">0</div>
<div class="t" style="left:373.2px;top:145.33px;font-size:10.5px;color:#c8c9cb;transform-origin:0 0;transform:rotate(-90deg)">64</div>
<div class="t" style="left:373.2px;top:195.26px;font-size:10.5px;color:#c8c9cb;transform-origin:0 0;transform:rotate(-90deg)">128</div>
<div class="t" style="left:373.2px;top:245.19px;font-size:10.5px;color:#c8c9cb;transform-origin:0 0;transform:rotate(-90deg)">192</div>
<div class="t" style="left:373.2px;top:295.12px;font-size:10.5px;color:#c8c9cb;transform-origin:0 0;transform:rotate(-90deg)">256</div>
<div class="t" style="left:373.2px;top:345.05px;font-size:10.5px;color:#c8c9cb;transform-origin:0 0;transform:rotate(-90deg)">320</div>
<div class="t" style="left:373.2px;top:394.98px;font-size:10.5px;color:#c8c9cb;transform-origin:0 0;transform:rotate(-90deg)">384</div>
<div class="t" style="left:373.2px;top:444.91px;font-size:10.5px;color:#c8c9cb;transform-origin:0 0;transform:rotate(-90deg)">448</div>
<div class="t" style="left:373.2px;top:494.84px;font-size:10.5px;color:#c8c9cb;transform-origin:0 0;transform:rotate(-90deg)">512</div>
<div class="t" style="left:373.2px;top:544.77px;font-size:10.5px;color:#c8c9cb;transform-origin:0 0;transform:rotate(-90deg)">576</div>
<div class="t" style="left:373.2px;top:594.70px;font-size:10.5px;color:#c8c9cb;transform-origin:0 0;transform:rotate(-90deg)">640</div>
<div class="t" style="left:373.2px;top:644.63px;font-size:10.5px;color:#c8c9cb;transform-origin:0 0;transform:rotate(-90deg)">704</div>
<svg class="a" style="left:0;top:0" width="1600" height="985"><path d="M391.4 47H1290.7V552.8H391.4Z" stroke="#c77fd0" stroke-width="1.2" fill="none" opacity="0.9"/><path d="M441.7 96.9H1340.8" stroke="#c77fd0" stroke-width="1.2" fill="none"/><path d="M386.4 96.9H441.7M1340.8 96.9H1600" stroke="#d36a6a" stroke-width="1.1" fill="none"/><path d="M1340.8 96.9V658.8" stroke="#8a86d8" stroke-width="1.1" fill="none" opacity="0.8"/><path d="M441.7 602.2H1600" stroke="#8a86d8" stroke-width="1.1" fill="none" opacity="0.8"/><path d="M441.7 28.2V96.9" stroke="#8cc86a" stroke-width="1.3" fill="none"/><path d="M441.7 96.9V602.2" stroke="#9ec8d8" stroke-width="1.1" fill="none" opacity="0.8"/><path d="M441.7 602.2V658.8" stroke="#c8d06a" stroke-width="1.1" fill="none"/><path d="M601 8.5V658.8" stroke="#9a1ee0" stroke-width="2" fill="none"/></svg>
<svg class="a" style="left:398px;top:41.5px" width="20" height="19" viewBox="0 0 20 19">
<path d="M6 1.5 L10 5 L14 1.5 M6 17.5 L10 14 L14 17.5 M1.5 5.5 L5 9.5 L1.5 13.5 M18.5 5.5 L15 9.5 L18.5 13.5" stroke="#e6e6e6" stroke-width="1.6" fill="none"/>
<rect x="7.8" y="7.3" width="4.4" height="4.4" fill="#e6e6e6"/></svg>
<svg class="a" style="left:439.7px;top:40.5px" width="21" height="21" viewBox="0 0 21 21"><circle cx="10.5" cy="10.5" r="9.6" fill="#e4e4e4" stroke="#2a2a2a" stroke-width="1"/><path d="M5.5 10.5H15.5" stroke="#1a1a1a" stroke-width="2.6"/></svg>
<svg class="a" style="left:549.7px;top:40.5px" width="21" height="21" viewBox="0 0 21 21"><circle cx="10.5" cy="10.5" r="9.6" fill="#e4e4e4" stroke="#2a2a2a" stroke-width="1"/><path d="M5.5 10.5H15.5M10.5 5.5V15.5" stroke="#1a1a1a" stroke-width="2.6"/></svg>
<div class="t" style="left:475.8px;top:43.9px;font-size:18.4px;color:#f2f2f2;text-shadow:0 0 2px #222">59.5 %</div>
<svg class="a" style="left:426.1px;top:81.5px" width="30" height="30" viewBox="0 0 30 30">
<g stroke="#1e1e1e" stroke-width="1.3" fill="#e6e6e6">
<rect x="13.3" y="5.6" width="3.4" height="3.9" rx="0.6"/>
<rect x="13.3" y="20.6" width="3.4" height="3.9" rx="0.6"/>
<rect x="5.6" y="13.3" width="3.9" height="3.4" rx="0.6"/>
<rect x="20.6" y="13.3" width="3.9" height="3.4" rx="0.6"/>
<circle cx="15" cy="15" r="4.1" fill="#dadada"/>
</g></svg>
<div class="a" style="left:367px;top:661.5px;width:1233px;height:6px;background:#1c1f25"></div>
<div class="a" style="left:367px;top:666.8px;width:1233px;height:320px;background:#363d4a;border-radius:5px 0 0 0"></div>
<div class="a" style="left:372px;top:674.5px;width:1200px;height:320px;background:#22262e;border-radius:5px 0 0 0"></div>
<div class="a" style="left:372px;top:674.5px;width:1200px;height:311px;overflow:hidden"><div class="t" style="left:6px;top:-2.90px;font-family:'Liberation Mono',monospace;font-size:17px;color:#c9cacd">Set glow_enabled</div><div class="t" style="left:6px;top:17.45px;font-family:'Liberation Mono',monospace;font-size:17px;color:#c9cacd">Set background_energy_multiplier</div><div class="t" style="left:6px;top:37.80px;font-family:'Liberation Mono',monospace;font-size:17px;color:#c9cacd">Set glow_enabled</div><div class="t" style="left:6px;top:58.15px;font-family:'Liberation Mono',monospace;font-size:17px;color:#c9cacd">Set glow_enabled</div><div class="t" style="left:6px;top:78.50px;font-family:'Liberation Mono',monospace;font-size:17px;color:#c9cacd">Set glow_enabled</div><div class="t" style="left:6px;top:98.85px;font-family:'Liberation Mono',monospace;font-size:17px;color:#c9cacd">Set adjustment_enabled</div><div class="t" style="left:6px;top:119.20px;font-family:'Liberation Mono',monospace;font-size:17px;color:#c9cacd">Toggle Visible</div><div class="t" style="left:6px;top:139.55px;font-family:'Liberation Mono',monospace;font-size:17px;color:#c9cacd">Toggle Visible</div><div class="t" style="left:6px;top:159.90px;font-family:'Liberation Mono',monospace;font-size:17px;color:#c9cacd">Toggle Visible</div><div class="t" style="left:6px;top:180.25px;font-family:'Liberation Mono',monospace;font-size:17px;color:#c9cacd">Toggle Visible</div><div class="t" style="left:6px;top:200.60px;font-family:'Liberation Mono',monospace;font-size:17px;color:#c9cacd">Toggle Visible</div><div class="t" style="left:6px;top:220.95px;font-family:'Liberation Mono',monospace;font-size:17px;color:#c9cacd">Toggle Visible</div><div class="t" style="left:6px;top:241.30px;font-family:'Liberation Mono',monospace;font-size:17px;color:#c9cacd">Toggle Visible</div><div class="t" style="left:6px;top:261.65px;font-family:'Liberation Mono',monospace;font-size:17px;color:#c9cacd">Toggle Visible</div><div class="t" style="left:6px;top:282.00px;font-family:'Liberation Mono',monospace;font-size:17px;color:#c9cacd">Toggle Visible</div><div class="t" style="left:6px;top:302.35px;font-family:'Liberation Mono',monospace;font-size:17px;color:#c9cacd">Toggle Visible</div></div>
<div class="a" style="left:1572px;top:674.5px;width:13px;height:311px;background:#1c1f25"></div>
<div class="a" style="left:1574px;top:700px;width:8px;height:285px;background:#8d9095;border-radius:4px"></div>
<div class="a" style="left:846px;top:506px;width:754.5999999999999px;height:462.29999999999995px;border-radius:12px;background:#0f0f0f;box-shadow:0 4px 18px rgba(0,0,0,0.35)"></div>
<div class="a" style="left:846.9px;top:507.1px;width:752.8px;height:460.29999999999995px;border-radius:11px;background:#5c5c5c"></div>
<div class="a" style="left:847.8px;top:508.1px;width:750.9999999999999px;height:35.00000000000002px;border-radius:10.5px 10.5px 0 0;background:#151515"></div>
<div class="a" style="left:847.8px;top:543.1px;width:750.9999999999999px;height:1.4px;background:#000"></div>
<div class="a" style="left:856.90px;top:517.40px;width:15.8px;height:15.8px;border-radius:50%;background:#3a3a3a"></div>
<div class="a" style="left:883.00px;top:517.40px;width:15.8px;height:15.8px;border-radius:50%;background:#3a3a3a"></div>
<div class="a" style="left:909.30px;top:517.40px;width:15.8px;height:15.8px;border-radius:50%;background:#3a3a3a"></div>
<div class="t" style="left:1140px;top:517.2px;font-size:17.55px;font-weight:bold;color:#5b5b5b">spacetime (DEBUG)</div>
<div class="a" style="left:847.8px;top:544.5px;width:750.9999999999999px;height:421.99999999999994px;border-radius:0 0 10.5px 10.5px;background:linear-gradient(#7a7b7d, #7b7c7e 50%, #7f8082)"></div>
<div class="a" style="left:1300px;top:544.5px;width:298.7px;height:80px;background:radial-gradient(ellipse 220px 50px at 180px 18px, rgba(110,200,90,0.30), rgba(110,200,90,0))"></div>
<div class="a" style="left:1300px;top:560px;width:140px;height:40px;background:radial-gradient(ellipse 60px 22px at 70px 18px, rgba(110,110,230,0.30), rgba(110,110,230,0))"></div>
<div class="a" style="left:847px;top:544.5px;width:1.1px;height:413.79999999999995px;background:#a2a3a5"></div>
<div class="a" style="left:856px;top:966.3px;width:734.5999999999999px;height:1.1px;background:#a2a3a5"></div>
<div class="a" style="left:847.8px;top:544.5px;width:750.9999999999999px;height:1px;background:#9c9d9f"></div>
<div class="a" style="left:1068.9px;top:550.3px;width:64.9px;height:19.8px;background:#636466;border-radius:3px"></div>
<div class="t" style="left:1071.5px;top:555.8px;font-size:10.6px;font-weight:bold;color:#f4f4f4">Start Server</div>
<div class="a" style="left:1137px;top:550.3px;width:59.0px;height:19.8px;background:#636466;border-radius:3px"></div>
<div class="t" style="left:1139.5px;top:555.8px;font-size:10.6px;font-weight:bold;color:#f4f4f4">Join Server</div>
<div class="a" style="left:1199.2px;top:550.3px;width:44.6px;height:19.8px;background:#636466;border-radius:3px"></div>
<div class="t" style="left:1202.5px;top:555.8px;font-size:10.6px;font-weight:bold;color:#f4f4f4">127.0.0.</div>
<div class="a" style="left:1246px;top:550.3px;width:44.5px;height:19.8px;background:#636466;border-radius:3px"></div>
<div class="t" style="left:1248.8px;top:555.8px;font-size:10.6px;font-weight:bold;color:#f4f4f4">1234</div>
<div class="a" style="left:1293.8px;top:550.3px;width:36.7px;height:19.8px;background:#636466;border-radius:3px"></div>
<div class="t" style="left:1296px;top:555.8px;font-size:10.6px;font-weight:bold;color:#f4f4f4">Status</div>
<div class="a" style="left:1338.8px;top:544.5px;width:60.5px;height:33px;background:#0000f0"></div>
<div class="a" style="left:1399.3px;top:544.5px;width:201px;height:33px;background:linear-gradient(90deg,#79f64f 0%,#77f24c 35%,#5cc93a 80%,#4aa82e 100%)"></div>
<div class="a" style="left:892px;top:589px;width:664px;height:327px;box-shadow:0 0 22px 8px rgba(95,175,225,0.22)"></div>
<div class="a" style="left:896px;top:592px;width:656px;height:321px;background:#000"></div>
<div class="a" style="left:898.7px;top:587px;width:650.3px;height:6.7px;background:linear-gradient(#6de0ff 0%,#5ad2f8 40%,#3aa6dc 100%)"></div>
<div class="a" style="left:898.7px;top:912px;width:650.3px;height:6.3px;background:linear-gradient(#6de0ff 0%,#5ad2f8 40%,#3aa6dc 100%)"></div>
<div class="a" style="left:891px;top:595px;width:7px;height:315px;background:linear-gradient(90deg,#3aa0d8 0%,#5ad2f8 25%,#6de0ff 60%,#3ea8dc 100%)"></div>
<div class="a" style="left:1551.2px;top:595px;width:6.4px;height:315px;background:linear-gradient(90deg,#3aa0d8 0%,#5ad2f8 25%,#6de0ff 60%,#3ea8dc 100%)"></div>
<div class="a" style="left:888.8px;top:585px;width:10.2px;height:10.2px;background:#45a6da"></div>
<div class="a" style="left:1549px;top:585px;width:10.2px;height:10.2px;background:#45a6da"></div>
<div class="a" style="left:888.8px;top:910.2px;width:10.2px;height:10.2px;background:#45a6da"></div>
<div class="a" style="left:1549px;top:910.2px;width:10.2px;height:10.2px;background:#45a6da"></div>
<div class="a" style="left:1046px;top:585.5px;width:20.5px;height:9.5px;background:#45a6da"></div>
<div class="a" style="left:1046px;top:910.5px;width:20.5px;height:9.5px;background:#45a6da"></div>
<div class="a" style="left:1213.8px;top:585.5px;width:20.5px;height:9.5px;background:#45a6da"></div>
<div class="a" style="left:1213.8px;top:910.5px;width:20.5px;height:9.5px;background:#45a6da"></div>
<div class="a" style="left:1381.2px;top:585.5px;width:20.5px;height:9.5px;background:#45a6da"></div>
<div class="a" style="left:1381.2px;top:910.5px;width:20.5px;height:9.5px;background:#45a6da"></div>
<div class="a" style="left:889.3px;top:741px;width:9.5px;height:10.5px;background:#45a6da"></div>
<div class="a" style="left:1549.3px;top:741px;width:9.5px;height:10.5px;background:#45a6da"></div>
<svg class="a" style="left:1161.00px;top:648.00px" width="126.00" height="199.50" viewBox="0 0 126.000 199.500">
<rect x="0.00" y="0.00" width="10.55" height="10.55" fill="#4aaee0"/>
<rect x="10.50" y="0.00" width="10.55" height="10.55" fill="#4aaee0"/>
<rect x="105.00" y="0.00" width="10.55" height="10.55" fill="#4aaee0"/>
<rect x="115.50" y="0.00" width="10.55" height="10.55" fill="#4aaee0"/>
<rect x="0.00" y="10.50" width="10.55" height="10.55" fill="#4aaee0"/>
<rect x="10.50" y="10.50" width="10.55" height="10.55" fill="#4aaee0"/>
<rect x="105.00" y="10.50" width="10.55" height="10.55" fill="#4aaee0"/>
<rect x="115.50" y="10.50" width="10.55" height="10.55" fill="#4aaee0"/>
<rect x="0.00" y="21.00" width="10.55" height="10.55" fill="#4aaee0"/>
<rect x="10.50" y="21.00" width="10.55" height="10.55" fill="#4aaee0"/>
<rect x="105.00" y="21.00" width="10.55" height="10.55" fill="#4aaee0"/>
<rect x="115.50" y="21.00" width="10.55" height="10.55" fill="#4aaee0"/>
<rect x="0.00" y="31.50" width="10.55" height="10.55" fill="#4aaee0"/>
<rect x="10.50" y="31.50" width="10.55" height="10.55" fill="#4aaee0"/>
<rect x="105.00" y="31.50" width="10.55" height="10.55" fill="#4aaee0"/>
<rect x="115.50" y="31.50" width="10.55" height="10.55" fill="#4aaee0"/>
<rect x="0.00" y="42.00" width="10.55" height="10.55" fill="#4aaee0"/>
<rect x="10.50" y="42.00" width="10.55" height="10.55" fill="#4aaee0"/>
<rect x="105.00" y="42.00" width="10.55" height="10.55" fill="#4aaee0"/>
<rect x="115.50" y="42.00" width="10.55" height="10.55" fill="#4aaee0"/>
<rect x="0.00" y="52.50" width="10.55" height="10.55" fill="#4aaee0"/>
<rect x="10.50" y="52.50" width="10.55" height="10.55" fill="#4aaee0"/>
<rect x="105.00" y="52.50" width="10.55" height="10.55" fill="#4aaee0"/>
<rect x="115.50" y="52.50" width="10.55" height="10.55" fill="#4aaee0"/>
<rect x="0.00" y="63.00" width="10.55" height="10.55" fill="#4aaee0"/>
<rect x="10.50" y="63.00" width="10.55" height="10.55" fill="#4aaee0"/>
<rect x="105.00" y="63.00" width="10.55" height="10.55" fill="#4aaee0"/>
<rect x="115.50" y="63.00" width="10.55" height="10.55" fill="#4aaee0"/>
<rect x="0.00" y="73.50" width="10.55" height="10.55" fill="#4aaee0"/>
<rect x="10.50" y="73.50" width="10.55" height="10.55" fill="#4aaee0"/>
<rect x="105.00" y="73.50" width="10.55" height="10.55" fill="#4aaee0"/>
<rect x="115.50" y="73.50" width="10.55" height="10.55" fill="#4aaee0"/>
<rect x="0.00" y="84.00" width="10.55" height="10.55" fill="#4aaee0"/>
<rect x="10.50" y="84.00" width="10.55" height="10.55" fill="#4aaee0"/>
<rect x="21.00" y="84.00" width="10.55" height="10.55" fill="#4aaee0"/>
<rect x="94.50" y="84.00" width="10.55" height="10.55" fill="#4aaee0"/>
<rect x="105.00" y="84.00" width="10.55" height="10.55" fill="#4aaee0"/>
<rect x="115.50" y="84.00" width="10.55" height="10.55" fill="#4aaee0"/>
<rect x="10.50" y="94.50" width="10.55" height="10.55" fill="#4aaee0"/>
<rect x="21.00" y="94.50" width="10.55" height="10.55" fill="#4aaee0"/>
<rect x="31.50" y="94.50" width="10.55" height="10.55" fill="#4aaee0"/>
<rect x="84.00" y="94.50" width="10.55" height="10.55" fill="#4aaee0"/>
<rect x="94.50" y="94.50" width="10.55" height="10.55" fill="#4aaee0"/>
<rect x="105.00" y="94.50" width="10.55" height="10.55" fill="#4aaee0"/>
<rect x="21.00" y="105.00" width="10.55" height="10.55" fill="#4aaee0"/>
<rect x="31.50" y="105.00" width="10.55" height="10.55" fill="#4aaee0"/>
<rect x="42.00" y="105.00" width="10.55" height="10.55" fill="#4aaee0"/>
<rect x="73.50" y="105.00" width="10.55" height="10.55" fill="#4aaee0"/>
<rect x="84.00" y="105.00" width="10.55" height="10.55" fill="#4aaee0"/>
<rect x="94.50" y="105.00" width="10.55" height="10.55" fill="#4aaee0"/>
<rect x="42.00" y="115.50" width="10.55" height="10.55" fill="#4aaee0"/>
<rect x="52.50" y="115.50" width="10.55" height="10.55" fill="#4aaee0"/>
<rect x="63.00" y="115.50" width="10.55" height="10.55" fill="#4aaee0"/>
<rect x="73.50" y="115.50" width="10.55" height="10.55" fill="#4aaee0"/>
<rect x="84.00" y="115.50" width="10.55" height="10.55" fill="#4aaee0"/>
<rect x="42.00" y="126.00" width="10.55" height="10.55" fill="#4aaee0"/>
<rect x="52.50" y="126.00" width="10.55" height="10.55" fill="#4aaee0"/>
<rect x="63.00" y="126.00" width="10.55" height="10.55" fill="#4aaee0"/>
<rect x="73.50" y="126.00" width="10.55" height="10.55" fill="#4aaee0"/>
<rect x="42.00" y="136.50" width="10.55" height="10.55" fill="#4aaee0"/>
<rect x="52.50" y="136.50" width="10.55" height="10.55" fill="#4aaee0"/>
<rect x="63.00" y="136.50" width="10.55" height="10.55" fill="#4aaee0"/>
<rect x="73.50" y="136.50" width="10.55" height="10.55" fill="#4aaee0"/>
<rect x="31.50" y="147.00" width="10.55" height="10.55" fill="#4aaee0"/>
<rect x="42.00" y="147.00" width="10.55" height="10.55" fill="#4aaee0"/>
<rect x="52.50" y="147.00" width="10.55" height="10.55" fill="#4aaee0"/>
<rect x="63.00" y="147.00" width="10.55" height="10.55" fill="#4aaee0"/>
<rect x="73.50" y="147.00" width="10.55" height="10.55" fill="#4aaee0"/>
<rect x="84.00" y="147.00" width="10.55" height="10.55" fill="#4aaee0"/>
<rect x="21.00" y="157.50" width="10.55" height="10.55" fill="#4aaee0"/>
<rect x="31.50" y="157.50" width="10.55" height="10.55" fill="#4aaee0"/>
<rect x="42.00" y="157.50" width="10.55" height="10.55" fill="#4aaee0"/>
<rect x="73.50" y="157.50" width="10.55" height="10.55" fill="#4aaee0"/>
<rect x="84.00" y="157.50" width="10.55" height="10.55" fill="#4aaee0"/>
<rect x="94.50" y="157.50" width="10.55" height="10.55" fill="#4aaee0"/>
<rect x="10.50" y="168.00" width="10.55" height="10.55" fill="#4aaee0"/>
<rect x="21.00" y="168.00" width="10.55" height="10.55" fill="#4aaee0"/>
<rect x="31.50" y="168.00" width="10.55" height="10.55" fill="#4aaee0"/>
<rect x="84.00" y="168.00" width="10.55" height="10.55" fill="#4aaee0"/>
<rect x="94.50" y="168.00" width="10.55" height="10.55" fill="#4aaee0"/>
<rect x="105.00" y="168.00" width="10.55" height="10.55" fill="#4aaee0"/>
<rect x="0.00" y="178.50" width="10.55" height="10.55" fill="#4aaee0"/>
<rect x="10.50" y="178.50" width="10.55" height="10.55" fill="#4aaee0"/>
<rect x="21.00" y="178.50" width="10.55" height="10.55" fill="#4aaee0"/>
<rect x="94.50" y="178.50" width="10.55" height="10.55" fill="#4aaee0"/>
<rect x="105.00" y="178.50" width="10.55" height="10.55" fill="#4aaee0"/>
<rect x="115.50" y="178.50" width="10.55" height="10.55" fill="#4aaee0"/>
<rect x="0.00" y="189.00" width="10.55" height="10.55" fill="#4aaee0"/>
<rect x="10.50" y="189.00" width="10.55" height="10.55" fill="#4aaee0"/>
<rect x="21.00" y="189.00" width="10.55" height="10.55" fill="#4aaee0"/>
<rect x="31.50" y="189.00" width="10.55" height="10.55" fill="#4aaee0"/>
<rect x="84.00" y="189.00" width="10.55" height="10.55" fill="#4aaee0"/>
<rect x="94.50" y="189.00" width="10.55" height="10.55" fill="#4aaee0"/>
<rect x="105.00" y="189.00" width="10.55" height="10.55" fill="#4aaee0"/>
<rect x="115.50" y="189.00" width="10.55" height="10.55" fill="#4aaee0"/>
<rect x="0.50" y="0.50" width="9.50" height="9.50" fill="none" stroke="#3f94c4" stroke-width="0.6" opacity="0.22"/>
<rect x="11.00" y="0.50" width="9.50" height="9.50" fill="none" stroke="#3f94c4" stroke-width="0.6" opacity="0.22"/>
<rect x="105.50" y="0.50" width="9.50" height="9.50" fill="none" stroke="#3f94c4" stroke-width="0.6" opacity="0.22"/>
<rect x="116.00" y="0.50" width="9.50" height="9.50" fill="none" stroke="#3f94c4" stroke-width="0.6" opacity="0.22"/>
<rect x="0.50" y="11.00" width="9.50" height="9.50" fill="none" stroke="#3f94c4" stroke-width="0.6" opacity="0.22"/>
<rect x="11.00" y="11.00" width="9.50" height="9.50" fill="none" stroke="#3f94c4" stroke-width="0.6" opacity="0.22"/>
<rect x="105.50" y="11.00" width="9.50" height="9.50" fill="none" stroke="#3f94c4" stroke-width="0.6" opacity="0.22"/>
<rect x="116.00" y="11.00" width="9.50" height="9.50" fill="none" stroke="#3f94c4" stroke-width="0.6" opacity="0.22"/>
<rect x="0.50" y="21.50" width="9.50" height="9.50" fill="none" stroke="#3f94c4" stroke-width="0.6" opacity="0.22"/>
<rect x="11.00" y="21.50" width="9.50" height="9.50" fill="none" stroke="#3f94c4" stroke-width="0.6" opacity="0.22"/>
<rect x="105.50" y="21.50" width="9.50" height="9.50" fill="none" stroke="#3f94c4" stroke-width="0.6" opacity="0.22"/>
<rect x="116.00" y="21.50" width="9.50" height="9.50" fill="none" stroke="#3f94c4" stroke-width="0.6" opacity="0.22"/>
<rect x="0.50" y="32.00" width="9.50" height="9.50" fill="none" stroke="#3f94c4" stroke-width="0.6" opacity="0.22"/>
<rect x="11.00" y="32.00" width="9.50" height="9.50" fill="none" stroke="#3f94c4" stroke-width="0.6" opacity="0.22"/>
<rect x="105.50" y="32.00" width="9.50" height="9.50" fill="none" stroke="#3f94c4" stroke-width="0.6" opacity="0.22"/>
<rect x="116.00" y="32.00" width="9.50" height="9.50" fill="none" stroke="#3f94c4" stroke-width="0.6" opacity="0.22"/>
<rect x="0.50" y="42.50" width="9.50" height="9.50" fill="none" stroke="#3f94c4" stroke-width="0.6" opacity="0.22"/>
<rect x="11.00" y="42.50" width="9.50" height="9.50" fill="none" stroke="#3f94c4" stroke-width="0.6" opacity="0.22"/>
<rect x="105.50" y="42.50" width="9.50" height="9.50" fill="none" stroke="#3f94c4" stroke-width="0.6" opacity="0.22"/>
<rect x="116.00" y="42.50" width="9.50" height="9.50" fill="none" stroke="#3f94c4" stroke-width="0.6" opacity="0.22"/>
<rect x="0.50" y="53.00" width="9.50" height="9.50" fill="none" stroke="#3f94c4" stroke-width="0.6" opacity="0.22"/>
<rect x="11.00" y="53.00" width="9.50" height="9.50" fill="none" stroke="#3f94c4" stroke-width="0.6" opacity="0.22"/>
<rect x="105.50" y="53.00" width="9.50" height="9.50" fill="none" stroke="#3f94c4" stroke-width="0.6" opacity="0.22"/>
<rect x="116.00" y="53.00" width="9.50" height="9.50" fill="none" stroke="#3f94c4" stroke-width="0.6" opacity="0.22"/>
<rect x="0.50" y="63.50" width="9.50" height="9.50" fill="none" stroke="#3f94c4" stroke-width="0.6" opacity="0.22"/>
<rect x="11.00" y="63.50" width="9.50" height="9.50" fill="none" stroke="#3f94c4" stroke-width="0.6" opacity="0.22"/>
<rect x="105.50" y="63.50" width="9.50" height="9.50" fill="none" stroke="#3f94c4" stroke-width="0.6" opacity="0.22"/>
<rect x="116.00" y="63.50" width="9.50" height="9.50" fill="none" stroke="#3f94c4" stroke-width="0.6" opacity="0.22"/>
<rect x="0.50" y="74.00" width="9.50" height="9.50" fill="none" stroke="#3f94c4" stroke-width="0.6" opacity="0.22"/>
<rect x="11.00" y="74.00" width="9.50" height="9.50" fill="none" stroke="#3f94c4" stroke-width="0.6" opacity="0.22"/>
<rect x="105.50" y="74.00" width="9.50" height="9.50" fill="none" stroke="#3f94c4" stroke-width="0.6" opacity="0.22"/>
<rect x="116.00" y="74.00" width="9.50" height="9.50" fill="none" stroke="#3f94c4" stroke-width="0.6" opacity="0.22"/>
<rect x="0.50" y="84.50" width="9.50" height="9.50" fill="none" stroke="#3f94c4" stroke-width="0.6" opacity="0.22"/>
<rect x="11.00" y="84.50" width="9.50" height="9.50" fill="none" stroke="#3f94c4" stroke-width="0.6" opacity="0.22"/>
<rect x="21.50" y="84.50" width="9.50" height="9.50" fill="none" stroke="#3f94c4" stroke-width="0.6" opacity="0.22"/>
<rect x="95.00" y="84.50" width="9.50" height="9.50" fill="none" stroke="#3f94c4" stroke-width="0.6" opacity="0.22"/>
<rect x="105.50" y="84.50" width="9.50" height="9.50" fill="none" stroke="#3f94c4" stroke-width="0.6" opacity="0.22"/>
<rect x="116.00" y="84.50" width="9.50" height="9.50" fill="none" stroke="#3f94c4" stroke-width="0.6" opacity="0.22"/>
<rect x="11.00" y="95.00" width="9.50" height="9.50" fill="none" stroke="#3f94c4" stroke-width="0.6" opacity="0.22"/>
<rect x="21.50" y="95.00" width="9.50" height="9.50" fill="none" stroke="#3f94c4" stroke-width="0.6" opacity="0.22"/>
<rect x="32.00" y="95.00" width="9.50" height="9.50" fill="none" stroke="#3f94c4" stroke-width="0.6" opacity="0.22"/>
<rect x="84.50" y="95.00" width="9.50" height="9.50" fill="none" stroke="#3f94c4" stroke-width="0.6" opacity="0.22"/>
<rect x="95.00" y="95.00" width="9.50" height="9.50" fill="none" stroke="#3f94c4" stroke-width="0.6" opacity="0.22"/>
<rect x="105.50" y="95.00" width="9.50" height="9.50" fill="none" stroke="#3f94c4" stroke-width="0.6" opacity="0.22"/>
<rect x="21.50" y="105.50" width="9.50" height="9.50" fill="none" stroke="#3f94c4" stroke-width="0.6" opacity="0.22"/>
<rect x="32.00" y="105.50" width="9.50" height="9.50" fill="none" stroke="#3f94c4" stroke-width="0.6" opacity="0.22"/>
<rect x="42.50" y="105.50" width="9.50" height="9.50" fill="none" stroke="#3f94c4" stroke-width="0.6" opacity="0.22"/>
<rect x="74.00" y="105.50" width="9.50" height="9.50" fill="none" stroke="#3f94c4" stroke-width="0.6" opacity="0.22"/>
<rect x="84.50" y="105.50" width="9.50" height="9.50" fill="none" stroke="#3f94c4" stroke-width="0.6" opacity="0.22"/>
<rect x="95.00" y="105.50" width="9.50" height="9.50" fill="none" stroke="#3f94c4" stroke-width="0.6" opacity="0.22"/>
<rect x="42.50" y="116.00" width="9.50" height="9.50" fill="none" stroke="#3f94c4" stroke-width="0.6" opacity="0.22"/>
<rect x="53.00" y="116.00" width="9.50" height="9.50" fill="none" stroke="#3f94c4" stroke-width="0.6" opacity="0.22"/>
<rect x="63.50" y="116.00" width="9.50" height="9.50" fill="none" stroke="#3f94c4" stroke-width="0.6" opacity="0.22"/>
<rect x="74.00" y="116.00" width="9.50" height="9.50" fill="none" stroke="#3f94c4" stroke-width="0.6" opacity="0.22"/>
<rect x="84.50" y="116.00" width="9.50" height="9.50" fill="none" stroke="#3f94c4" stroke-width="0.6" opacity="0.22"/>
<rect x="42.50" y="126.50" width="9.50" height="9.50" fill="none" stroke="#3f94c4" stroke-width="0.6" opacity="0.22"/>
<rect x="53.00" y="126.50" width="9.50" height="9.50" fill="none" stroke="#3f94c4" stroke-width="0.6" opacity="0.22"/>
<rect x="63.50" y="126.50" width="9.50" height="9.50" fill="none" stroke="#3f94c4" stroke-width="0.6" opacity="0.22"/>
<rect x="74.00" y="126.50" width="9.50" height="9.50" fill="none" stroke="#3f94c4" stroke-width="0.6" opacity="0.22"/>
<rect x="42.50" y="137.00" width="9.50" height="9.50" fill="none" stroke="#3f94c4" stroke-width="0.6" opacity="0.22"/>
<rect x="53.00" y="137.00" width="9.50" height="9.50" fill="none" stroke="#3f94c4" stroke-width="0.6" opacity="0.22"/>
<rect x="63.50" y="137.00" width="9.50" height="9.50" fill="none" stroke="#3f94c4" stroke-width="0.6" opacity="0.22"/>
<rect x="74.00" y="137.00" width="9.50" height="9.50" fill="none" stroke="#3f94c4" stroke-width="0.6" opacity="0.22"/>
<rect x="32.00" y="147.50" width="9.50" height="9.50" fill="none" stroke="#3f94c4" stroke-width="0.6" opacity="0.22"/>
<rect x="42.50" y="147.50" width="9.50" height="9.50" fill="none" stroke="#3f94c4" stroke-width="0.6" opacity="0.22"/>
<rect x="53.00" y="147.50" width="9.50" height="9.50" fill="none" stroke="#3f94c4" stroke-width="0.6" opacity="0.22"/>
<rect x="63.50" y="147.50" width="9.50" height="9.50" fill="none" stroke="#3f94c4" stroke-width="0.6" opacity="0.22"/>
<rect x="74.00" y="147.50" width="9.50" height="9.50" fill="none" stroke="#3f94c4" stroke-width="0.6" opacity="0.22"/>
<rect x="84.50" y="147.50" width="9.50" height="9.50" fill="none" stroke="#3f94c4" stroke-width="0.6" opacity="0.22"/>
<rect x="21.50" y="158.00" width="9.50" height="9.50" fill="none" stroke="#3f94c4" stroke-width="0.6" opacity="0.22"/>
<rect x="32.00" y="158.00" width="9.50" height="9.50" fill="none" stroke="#3f94c4" stroke-width="0.6" opacity="0.22"/>
<rect x="42.50" y="158.00" width="9.50" height="9.50" fill="none" stroke="#3f94c4" stroke-width="0.6" opacity="0.22"/>
<rect x="74.00" y="158.00" width="9.50" height="9.50" fill="none" stroke="#3f94c4" stroke-width="0.6" opacity="0.22"/>
<rect x="84.50" y="158.00" width="9.50" height="9.50" fill="none" stroke="#3f94c4" stroke-width="0.6" opacity="0.22"/>
<rect x="95.00" y="158.00" width="9.50" height="9.50" fill="none" stroke="#3f94c4" stroke-width="0.6" opacity="0.22"/>
<rect x="11.00" y="168.50" width="9.50" height="9.50" fill="none" stroke="#3f94c4" stroke-width="0.6" opacity="0.22"/>
<rect x="21.50" y="168.50" width="9.50" height="9.50" fill="none" stroke="#3f94c4" stroke-width="0.6" opacity="0.22"/>
<rect x="32.00" y="168.50" width="9.50" height="9.50" fill="none" stroke="#3f94c4" stroke-width="0.6" opacity="0.22"/>
<rect x="84.50" y="168.50" width="9.50" height="9.50" fill="none" stroke="#3f94c4" stroke-width="0.6" opacity="0.22"/>
<rect x="95.00" y="168.50" width="9.50" height="9.50" fill="none" stroke="#3f94c4" stroke-width="0.6" opacity="0.22"/>
<rect x="105.50" y="168.50" width="9.50" height="9.50" fill="none" stroke="#3f94c4" stroke-width="0.6" opacity="0.22"/>
<rect x="0.50" y="179.00" width="9.50" height="9.50" fill="none" stroke="#3f94c4" stroke-width="0.6" opacity="0.22"/>
<rect x="11.00" y="179.00" width="9.50" height="9.50" fill="none" stroke="#3f94c4" stroke-width="0.6" opacity="0.22"/>
<rect x="21.50" y="179.00" width="9.50" height="9.50" fill="none" stroke="#3f94c4" stroke-width="0.6" opacity="0.22"/>
<rect x="95.00" y="179.00" width="9.50" height="9.50" fill="none" stroke="#3f94c4" stroke-width="0.6" opacity="0.22"/>
<rect x="105.50" y="179.00" width="9.50" height="9.50" fill="none" stroke="#3f94c4" stroke-width="0.6" opacity="0.22"/>
<rect x="116.00" y="179.00" width="9.50" height="9.50" fill="none" stroke="#3f94c4" stroke-width="0.6" opacity="0.22"/>
<rect x="0.50" y="189.50" width="9.50" height="9.50" fill="none" stroke="#3f94c4" stroke-width="0.6" opacity="0.22"/>
<rect x="11.00" y="189.50" width="9.50" height="9.50" fill="none" stroke="#3f94c4" stroke-width="0.6" opacity="0.22"/>
<rect x="21.50" y="189.50" width="9.50" height="9.50" fill="none" stroke="#3f94c4" stroke-width="0.6" opacity="0.22"/>
<rect x="32.00" y="189.50" width="9.50" height="9.50" fill="none" stroke="#3f94c4" stroke-width="0.6" opacity="0.22"/>
<rect x="84.50" y="189.50" width="9.50" height="9.50" fill="none" stroke="#3f94c4" stroke-width="0.6" opacity="0.22"/>
<rect x="95.00" y="189.50" width="9.50" height="9.50" fill="none" stroke="#3f94c4" stroke-width="0.6" opacity="0.22"/>
<rect x="105.50" y="189.50" width="9.50" height="9.50" fill="none" stroke="#3f94c4" stroke-width="0.6" opacity="0.22"/>
<rect x="116.00" y="189.50" width="9.50" height="9.50" fill="none" stroke="#3f94c4" stroke-width="0.6" opacity="0.22"/>
<rect x="10.50" y="21.00" width="2.10" height="40.95" fill="#888" opacity="0.95"/>
<rect x="19.11" y="21.00" width="1.89" height="40.95" fill="#888" opacity="0.95"/>
<rect x="12.39" y="10.50" width="6.93" height="61.95" fill="#7fe2ff" rx="1"/>
<rect x="14.28" y="11.55" width="2.94" height="59.85" fill="#ffffff" opacity="0.22"/>
<rect x="105.00" y="21.00" width="2.10" height="40.95" fill="#888" opacity="0.95"/>
<rect x="113.61" y="21.00" width="1.89" height="40.95" fill="#888" opacity="0.95"/>
<rect x="106.89" y="10.50" width="6.93" height="61.95" fill="#7fe2ff" rx="1"/>
<rect x="108.78" y="11.55" width="2.94" height="59.85" fill="#ffffff" opacity="0.22"/>
<rect x="21.00" y="189.00" width="21.00" height="10.50" fill="#000"/>
<rect x="21.00" y="189.53" width="21.00" height="7.35" fill="#7fe2ff" rx="1"/>
<rect x="21.00" y="196.88" width="21.00" height="2.62" fill="#777"/>
<rect x="84.00" y="189.00" width="21.00" height="10.50" fill="#000"/>
<rect x="84.00" y="189.53" width="21.00" height="7.35" fill="#7fe2ff" rx="1"/>
<rect x="84.00" y="196.88" width="21.00" height="2.62" fill="#777"/>
</svg>
<svg class="a" style="left:1186px;top:694px" width="26" height="32" viewBox="0 0 26 32"><polygon points="5.4,1.7 10,2.3 11.8,3.6 14.6,4.8 16.6,6.8 19.6,8.4 22.4,11.6 23.8,15.8 22.8,19.8 21,22.6 17,24.8 13,26.6 8.4,28.2 4.6,29.6 1,28.6 1.2,25.2 5,23.2 8.6,21.4 10.6,18 10.8,13.8 9.6,10.6 6.8,8.6 4.4,6.6 4.4,3.4" fill="#a86fd2"/></svg>
</body></html>
